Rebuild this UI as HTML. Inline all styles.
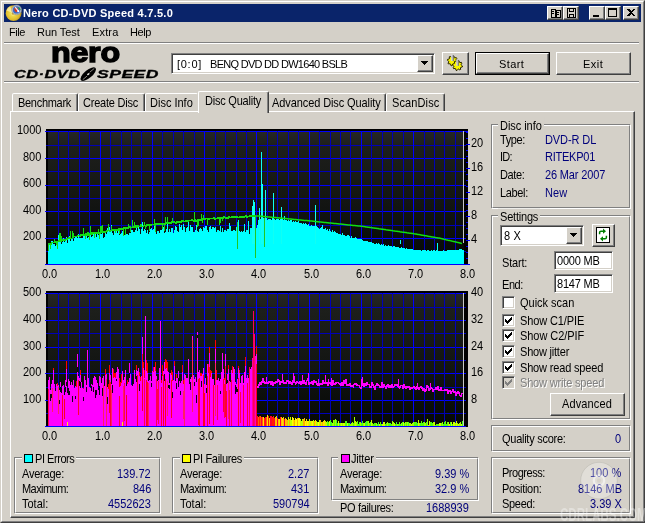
<!DOCTYPE html>
<html><head><meta charset="utf-8"><title>Nero CD-DVD Speed 4.7.5.0</title>
<style>
html,body{margin:0;padding:0}
body{width:645px;height:523px;background:#d4d0c8;position:relative;overflow:hidden;font-family:"Liberation Sans",sans-serif;font-size:11px;color:#000}
.abs{position:absolute}
.t{position:absolute;white-space:pre;line-height:14px;height:14px;will-change:transform;transform-origin:0 11px;transform:scaleY(1.125)}
.m{transform:none}
.frame{position:absolute;left:0;top:0;width:643px;height:521px;border:1px solid;border-color:#d4d0c8 #404040 #404040 #d4d0c8}
.frame2{position:absolute;left:1px;top:1px;width:641px;height:519px;border:1px solid;border-color:#fff #808080 #808080 #fff}
.title{position:absolute;left:4px;top:4px;width:637px;height:18px;background:#0a246a}
.btn{position:absolute;background:#d4d0c8;box-sizing:border-box;border:1px solid;border-color:#fff #404040 #404040 #fff;box-shadow:inset -1px -1px 0 #808080, inset 1px 1px 0 #d4d0c8}
.sunk{position:absolute;background:#fff;box-sizing:border-box;border:1px solid;border-color:#808080 #fff #fff #808080;box-shadow:inset 1px 1px 0 #404040, inset -1px -1px 0 #d4d0c8}
.sep{position:absolute;height:0;border-top:1px solid #808080;border-bottom:1px solid #fff}
.gb{position:absolute;box-sizing:border-box;border:1px solid #808080;box-shadow:1px 1px 0 #fff}
.gb i{position:absolute;left:0;top:0;right:0;bottom:0;border:1px solid;border-color:#fff transparent transparent #fff;margin:0 -1px -1px 0;display:block}
.cb{position:absolute;width:13px;height:13px;box-sizing:border-box;border:1px solid;border-color:#808080 #fff #fff #808080;box-shadow:inset 1px 1px 0 #404040, inset -1px -1px 0 #d4d0c8;padding:0}
.cb svg{left:2px !important;top:2px !important}
.tab{position:absolute;box-sizing:border-box;background:#d4d0c8;border:1px solid;border-color:#fff #404040 transparent #fff;border-radius:2px 2px 0 0;box-shadow:inset -1px 0 0 #808080}
.lg{will-change:transform;top:66px;height:16px;white-space:pre;font-weight:bold;font-style:italic;font-size:10.5px;line-height:16px;letter-spacing:0.3px;transform-origin:0 50%;-webkit-text-stroke:0.3px #000}
.sq{position:absolute;width:9px;height:9px;box-sizing:border-box;border:1px solid #000}
</style></head><body>
<div class="frame"></div><div class="frame2"></div>
<div class="title"></div>

<div class="btn" style="left:547px;top:6px;width:16px;height:14px"><svg class="abs" style="left:2px;top:1px" width="11" height="10" viewBox="0 0 11 10" shape-rendering="crispEdges"><path d="M1,1h4v8h-4zM6,2h4v7h-4z" fill="none" stroke="#000"/><path d="M2,3h2M2,5h2M7,4h2M7,6h2" stroke="#000"/></svg></div>
<div class="btn" style="left:563px;top:6px;width:16px;height:14px"><svg class="abs" style="left:2px;top:1px" width="11" height="10" viewBox="0 0 11 10" shape-rendering="crispEdges"><path d="M1.5,0.5h8v9h-8z" fill="none" stroke="#000"/><path d="M3.5,0.5v3h4v-3M3.5,9.5v-3h4v3" fill="none" stroke="#000"/></svg></div>
<div class="btn" style="left:589px;top:6px;width:16px;height:14px"><div class="abs" style="left:3px;top:8px;width:6px;height:2px;background:#000"></div></div>
<div class="btn" style="left:605px;top:6px;width:16px;height:14px"><div class="abs" style="left:2px;top:1px;width:9px;height:9px;box-sizing:border-box;border:1px solid #000;border-top-width:2px"></div></div>
<div class="btn" style="left:623px;top:6px;width:16px;height:14px"><svg class="abs" style="left:3px;top:2px" width="8" height="7" viewBox="0 0 8 7" shape-rendering="crispEdges"><path d="M0,0h2l2,2l2,-2h2l-3,3.5l3,3.5h-2l-2,-2l-2,2h-2l3,-3.5z" fill="#000"/></svg></div>
<svg class="abs" style="left:4px;top:4px" width="20" height="18" viewBox="4 4 20 18"><defs><radialGradient id="gold" cx="0.45" cy="0.5" r="0.55"><stop offset="0" stop-color="#fff6a0"/><stop offset="0.35" stop-color="#f0d848"/><stop offset="0.8" stop-color="#dcb82c"/><stop offset="1" stop-color="#a88418"/></radialGradient></defs><circle cx="13.6" cy="13.2" r="7.9" fill="url(#gold)"/><path d="M13.6,13.2L6.4,10.5A7.9,7.9 0 0 1 10,6.2Z" fill="#fff8b8" opacity="0.7"/><circle cx="13" cy="13.6" r="1.6" fill="#c8a428" stroke="#f8eca0" stroke-width="0.6"/><circle cx="16.6" cy="9.9" r="4.9" fill="#b8bcc8" stroke="#8a8e9c" stroke-width="0.6"/><circle cx="16.6" cy="9.9" r="3.7" fill="#3a6cc8"/><path d="M14.2,8.2L17.2,7.4L18.6,10.2L16.4,12.6L14.6,11Z" fill="#d83820"/><path d="M15.2,7.2L18.8,11.6" stroke="#f4f4f4" stroke-width="1.2"/><circle cx="18.3" cy="11.2" r="1" fill="#fff"/><path d="M18.4,7.4A3.7,3.7 0 0 1 20.2,10" stroke="#20a040" stroke-width="1.2" fill="none"/></svg>
<div class="sep" style="left:4px;top:42px;width:635px"></div>
<div class="sep" style="left:4px;top:81px;width:635px"></div>
<div class="abs" id="nero" style="will-change:transform;left:50.5px;top:36px;font-size:28px;line-height:34px;font-weight:bold;letter-spacing:-0.2px;-webkit-text-stroke:1.4px #000;white-space:pre;transform-origin:0 50%;transform:scaleX(1.15)">nero</div>
<div class="abs lg" id="cd1" style="left:14px;transform:scaleX(1.56)">CD·DVD</div>
<div class="abs lg" id="cd2" style="left:96.5px;transform:scaleX(1.67)">SPEED</div>
<svg class="abs" style="left:78px;top:64px" width="22" height="20" viewBox="0 0 22 20"><g transform="rotate(-40 10.3 10.1)"><ellipse cx="10.3" cy="10.1" rx="9.5" ry="3.9" fill="#000"/><ellipse cx="10.3" cy="10.1" rx="1.5" ry="0.8" fill="#e8e6e0"/><path d="M12.5,9.6H18.5M2.5,10.8H8" stroke="#d4d0c8" stroke-width="0.6"/></g></svg>
<div class="sunk" style="left:171px;top:53px;width:264px;height:21px"></div>
<div class="btn" style="left:417px;top:55px;width:16px;height:17px"><svg class="abs" style="left:3px;top:5px" width="7" height="4" viewBox="0 0 7 4" shape-rendering="crispEdges"><path d="M0,0h7l-3.5,4z" fill="#000"/></svg></div>
<div class="btn" style="left:442px;top:52px;width:27px;height:23px"><svg class="abs" style="left:0;top:0" width="25" height="21" viewBox="0 0 25 21"><polygon points="14.4,8.3 14.2,9.3 12.7,9.6 12.3,10.2 12.6,11.7 11.7,12.2 10.5,11.4 9.8,11.6 8.9,12.8 7.9,12.6 7.6,11.1 7.0,10.7 5.5,11.0 5.0,10.1 5.8,8.9 5.6,8.2 4.4,7.3 4.6,6.3 6.1,6.0 6.5,5.4 6.2,3.9 7.1,3.4 8.3,4.2 9.0,4.0 9.9,2.8 10.9,3.0 11.2,4.5 11.8,4.9 13.3,4.6 13.8,5.5 13.0,6.7 13.2,7.4" fill="#f8f400" stroke="#2a2400" stroke-width="1" stroke-linejoin="round"/><rect x="8.4" y="2.0" width="2" height="6.0" fill="#a4a4b0"/><rect x="8.4" y="2.0" width="0.8" height="6.0" fill="#ececf4"/><rect x="10.1" y="2.5" width="0.6" height="5.5" fill="#585864"/><polygon points="19.5,13.0 19.3,14.0 17.8,14.3 17.4,14.9 17.7,16.4 16.8,16.9 15.6,16.1 14.9,16.3 14.0,17.5 13.0,17.3 12.7,15.8 12.1,15.4 10.6,15.7 10.1,14.8 10.9,13.6 10.7,12.9 9.5,12.0 9.7,11.0 11.2,10.7 11.6,10.1 11.3,8.6 12.2,8.1 13.4,8.9 14.1,8.7 15.0,7.5 16.0,7.7 16.3,9.2 16.9,9.6 18.4,9.3 18.9,10.2 18.1,11.4 18.3,12.1" fill="#f8f400" stroke="#2a2400" stroke-width="1" stroke-linejoin="round"/><rect x="13.5" y="6.8" width="2" height="6.0" fill="#a4a4b0"/><rect x="13.5" y="6.8" width="0.8" height="6.0" fill="#ececf4"/><rect x="15.2" y="7.3" width="0.6" height="5.5" fill="#585864"/></svg></div>
<div class="abs" style="left:475px;top:52px;width:75px;height:23px;background:#000"></div>
<div class="btn" style="left:476px;top:53px;width:73px;height:21px"></div>
<div class="btn" style="left:556px;top:52px;width:75px;height:23px"></div>
<div class="tab" style="left:12px;top:93px;width:66px;height:19px"></div>
<div class="tab" style="left:78px;top:93px;width:67px;height:19px"></div>
<div class="tab" style="left:145px;top:93px;width:53px;height:19px;border-right-color:transparent;box-shadow:none"></div>
<div class="tab" style="left:268px;top:93px;width:118px;height:19px"></div>
<div class="tab" style="left:386px;top:93px;width:59px;height:19px"></div>
<div class="abs" style="left:10px;top:111px;width:625px;height:407px;box-sizing:border-box;border:1px solid;border-color:#fff #404040 #404040 #fff;box-shadow:inset -1px -1px 0 #808080"></div>
<div class="tab" style="left:198px;top:91px;width:71px;height:22px;border-bottom:none"></div>
<svg class="abs" style="left:0;top:0" width="645" height="523" viewBox="0 0 645 523" shape-rendering="crispEdges"><defs><linearGradient id="bg" x1="0" y1="0" x2="0" y2="1"><stop offset="0" stop-color="#262626"/><stop offset="0.12" stop-color="#1d1f1b"/><stop offset="0.55" stop-color="#131512"/><stop offset="1" stop-color="#050805"/></linearGradient></defs><rect x="46" y="129" width="422" height="136" fill="#000"/><rect x="48" y="131" width="416" height="133" fill="url(#bg)"/><rect x="45" y="131" width="421" height="1" fill="#00f"/><rect x="46" y="145" width="420" height="1" fill="#0000b8"/><rect x="45" y="158" width="421" height="1" fill="#00f"/><rect x="46" y="171" width="420" height="1" fill="#0000b8"/><rect x="45" y="185" width="421" height="1" fill="#00f"/><rect x="46" y="198" width="420" height="1" fill="#0000b8"/><rect x="45" y="211" width="421" height="1" fill="#00f"/><rect x="46" y="225" width="420" height="1" fill="#0000b8"/><rect x="45" y="238" width="421" height="1" fill="#00f"/><rect x="46" y="251" width="420" height="1" fill="#0000b8"/><rect x="45" y="264" width="421" height="1" fill="#00f"/><rect x="58" y="131" width="1" height="133" fill="#0000b8"/><rect x="68" y="131" width="1" height="133" fill="#0000b8"/><rect x="79" y="131" width="1" height="133" fill="#0000b8"/><rect x="89" y="131" width="1" height="133" fill="#0000b8"/><rect x="100" y="131" width="1" height="133" fill="#00f"/><rect x="110" y="131" width="1" height="133" fill="#0000b8"/><rect x="121" y="131" width="1" height="133" fill="#0000b8"/><rect x="131" y="131" width="1" height="133" fill="#0000b8"/><rect x="141" y="131" width="1" height="133" fill="#0000b8"/><rect x="152" y="131" width="1" height="133" fill="#00f"/><rect x="162" y="131" width="1" height="133" fill="#0000b8"/><rect x="173" y="131" width="1" height="133" fill="#0000b8"/><rect x="183" y="131" width="1" height="133" fill="#0000b8"/><rect x="194" y="131" width="1" height="133" fill="#0000b8"/><rect x="204" y="131" width="1" height="133" fill="#00f"/><rect x="215" y="131" width="1" height="133" fill="#0000b8"/><rect x="225" y="131" width="1" height="133" fill="#0000b8"/><rect x="236" y="131" width="1" height="133" fill="#0000b8"/><rect x="246" y="131" width="1" height="133" fill="#0000b8"/><rect x="256" y="131" width="1" height="133" fill="#00f"/><rect x="267" y="131" width="1" height="133" fill="#0000b8"/><rect x="277" y="131" width="1" height="133" fill="#0000b8"/><rect x="288" y="131" width="1" height="133" fill="#0000b8"/><rect x="298" y="131" width="1" height="133" fill="#0000b8"/><rect x="309" y="131" width="1" height="133" fill="#00f"/><rect x="319" y="131" width="1" height="133" fill="#0000b8"/><rect x="330" y="131" width="1" height="133" fill="#0000b8"/><rect x="340" y="131" width="1" height="133" fill="#0000b8"/><rect x="350" y="131" width="1" height="133" fill="#0000b8"/><rect x="361" y="131" width="1" height="133" fill="#00f"/><rect x="371" y="131" width="1" height="133" fill="#0000b8"/><rect x="382" y="131" width="1" height="133" fill="#0000b8"/><rect x="392" y="131" width="1" height="133" fill="#0000b8"/><rect x="403" y="131" width="1" height="133" fill="#0000b8"/><rect x="413" y="131" width="1" height="133" fill="#00f"/><rect x="424" y="131" width="1" height="133" fill="#0000b8"/><rect x="434" y="131" width="1" height="133" fill="#0000b8"/><rect x="444" y="131" width="1" height="133" fill="#0000b8"/><rect x="455" y="131" width="1" height="133" fill="#0000b8"/><rect x="466" y="131" width="2" height="1" fill="#00f"/><path d="M48,264L48,248.1L49,248.1L49,243.4L50,243.4L50,245.2L51,245.2L51,240.6L52,240.6L52,241.1L53,241.1L53,243.6L54,243.6L54,243.5L55,243.5L55,245.9L56,245.9L56,244.3L57,244.3L57,242.5L58,242.5L58,234.6L59,234.6L59,239.8L60,239.8L60,242.2L61,242.2L61,243.9L62,243.9L62,242.1L63,242.1L63,237.8L64,237.8L64,241.9L65,241.9L65,240.2L66,240.2L66,237.0L67,237.0L67,242.6L68,242.6L68,238.8L69,238.8L69,236.4L70,236.4L70,240.9L71,240.9L71,238.7L72,238.7L72,236.2L73,236.2L73,241.0L74,241.0L74,238.4L75,238.4L75,236.8L76,236.8L76,237.2L77,237.2L77,238.3L78,238.3L78,233.6L79,233.6L79,237.8L80,237.8L80,238.4L81,238.4L81,237.6L82,237.6L82,238.2L83,238.2L83,235.0L84,235.0L84,235.3L85,235.3L85,238.1L86,238.1L86,236.2L87,236.2L87,238.0L88,238.0L88,236.7L89,236.7L89,237.2L90,237.2L90,235.1L91,235.1L91,236.8L92,236.8L92,236.1L93,236.1L93,234.2L94,234.2L94,236.0L95,236.0L95,232.7L96,232.7L96,237.2L97,237.2L97,232.1L98,232.1L98,235.4L99,235.4L99,235.2L100,235.2L100,229.7L101,229.7L101,234.3L102,234.3L102,230.2L103,230.2L103,237.5L104,237.5L104,236.8L105,236.8L105,232.8L106,232.8L106,233.9L107,233.9L107,228.1L108,228.1L108,231.0L109,231.0L109,227.1L110,227.1L110,230.6L111,230.6L111,225.0L112,225.0L112,233.0L113,233.0L113,235.2L114,235.2L114,230.5L115,230.5L115,230.5L116,230.5L116,231.1L117,231.1L117,233.4L118,233.4L118,231.0L119,231.0L119,235.4L120,235.4L120,234.2L121,234.2L121,233.2L122,233.2L122,231.3L123,231.3L123,232.9L124,232.9L124,235.0L125,235.0L125,228.1L126,228.1L126,233.7L127,233.7L127,233.7L128,233.7L128,234.5L129,234.5L129,232.9L130,232.9L130,232.6L131,232.6L131,230.4L132,230.4L132,230.2L133,230.2L133,231.9L134,231.9L134,232.2L135,232.2L135,230.1L136,230.1L136,225.9L137,225.9L137,230.6L138,230.6L138,225.2L139,225.2L139,228.7L140,228.7L140,234.4L141,234.4L141,229.0L142,229.0L142,222.4L143,222.4L143,231.4L144,231.4L144,229.3L145,229.3L145,229.7L146,229.7L146,233.3L147,233.3L147,229.9L148,229.9L148,233.6L149,233.6L149,231.7L150,231.7L150,228.7L151,228.7L151,228.3L152,228.3L152,229.9L153,229.9L153,229.0L154,229.0L154,226.4L155,226.4L155,228.7L156,228.7L156,233.5L157,233.5L157,230.8L158,230.8L158,230.5L159,230.5L159,233.1L160,233.1L160,230.0L161,230.0L161,229.5L162,229.5L162,228.1L163,228.1L163,227.3L164,227.3L164,232.5L165,232.5L165,231.8L166,231.8L166,229.0L167,229.0L167,224.4L168,224.4L168,231.7L169,231.7L169,229.4L170,229.4L170,232.0L171,232.0L171,228.0L172,228.0L172,227.5L173,227.5L173,232.7L174,232.7L174,229.5L175,229.5L175,226.1L176,226.1L176,226.6L177,226.6L177,231.1L178,231.1L178,231.7L179,231.7L179,224.3L180,224.3L180,226.9L181,226.9L181,224.9L182,224.9L182,229.8L183,229.8L183,223.8L184,223.8L184,227.2L185,227.2L185,231.5L186,231.5L186,228.3L187,228.3L187,227.3L188,227.3L188,221.0L189,221.0L189,231.3L190,231.3L190,225.2L191,225.2L191,226.6L192,226.6L192,227.1L193,227.1L193,232.0L194,232.0L194,232.2L195,232.2L195,229.9L196,229.9L196,224.5L197,224.5L197,231.2L198,231.2L198,231.9L199,231.9L199,228.7L200,228.7L200,227.5L201,227.5L201,229.2L202,229.2L202,231.1L203,231.1L203,226.7L204,226.7L204,228.1L205,228.1L205,225.8L206,225.8L206,225.5L207,225.5L207,230.3L208,230.3L208,231.8L209,231.8L209,226.6L210,226.6L210,226.0L211,226.0L211,229.0L212,229.0L212,227.1L213,227.1L213,226.5L214,226.5L214,228.1L215,228.1L215,226.5L216,226.5L216,231.9L217,231.9L217,230.4L218,230.4L218,230.4L219,230.4L219,231.4L220,231.4L220,226.4L221,226.4L221,232.0L222,232.0L222,227.9L223,227.9L223,231.8L224,231.8L224,230.0L225,230.0L225,229.7L226,229.7L226,231.2L227,231.2L227,229.0L228,229.0L228,229.0L229,229.0L229,222.8L230,222.8L230,226.2L231,226.2L231,231.4L232,231.4L232,231.3L233,231.3L233,230.3L234,230.3L234,230.1L235,230.1L235,231.3L236,231.3L236,226.7L237,226.7L237,227.4L238,227.4L238,220.2L239,220.2L239,230.7L240,230.7L240,231.7L241,231.7L241,230.5L242,230.5L242,231.8L243,231.8L243,230.5L244,230.5L244,223.5L245,223.5L245,231.5L246,231.5L246,229.8L247,229.8L247,230.1L248,230.1L248,221.4L249,221.4L249,233.5L250,233.5L250,227.6L251,227.6L251,227.9L252,227.9L252,230.1L253,230.1L253,232.0L254,232.0L254,229.9L255,229.9L255,223.3L256,223.3L256,227.7L257,227.7L257,225.3L258,225.3L258,219.7L259,219.7L259,218.1L260,218.1L260,219.2L261,219.2L261,218.8L262,218.8L262,220.0L263,220.0L263,217.9L264,217.9L264,218.3L265,218.3L265,218.6L266,218.6L266,218.4L267,218.4L267,219.5L268,219.5L268,219.3L269,219.3L269,219.4L270,219.4L270,218.6L271,218.6L271,219.7L272,219.7L272,218.0L273,218.0L273,218.9L274,218.9L274,219.0L275,219.0L275,219.8L276,219.8L276,218.7L277,218.7L277,218.6L278,218.6L278,219.1L279,219.1L279,220.0L280,220.0L280,219.0L281,219.0L281,220.4L282,220.4L282,219.1L283,219.1L283,219.7L284,219.7L284,216.2L285,216.2L285,220.1L286,220.1L286,220.0L287,220.0L287,220.9L288,220.9L288,219.8L289,219.8L289,220.8L290,220.8L290,219.9L291,219.9L291,220.1L292,220.1L292,221.8L293,221.8L293,220.8L294,220.8L294,221.6L295,221.6L295,220.9L296,220.9L296,221.6L297,221.6L297,222.0L298,222.0L298,221.4L299,221.4L299,223.4L300,223.4L300,222.6L301,222.6L301,223.3L302,223.3L302,224.2L303,224.2L303,223.0L304,223.0L304,223.6L305,223.6L305,223.2L306,223.2L306,224.0L307,224.0L307,224.8L308,224.8L308,223.8L309,223.8L309,225.8L310,225.8L310,226.2L311,226.2L311,225.1L312,225.1L312,226.0L313,226.0L313,226.3L314,226.3L314,225.6L315,225.6L315,226.9L316,226.9L316,226.1L317,226.1L317,226.8L318,226.8L318,227.7L319,227.7L319,228.5L320,228.5L320,228.4L321,228.4L321,227.2L322,227.2L322,224.8L323,224.8L323,229.4L324,229.4L324,229.4L325,229.4L325,228.4L326,228.4L326,230.2L327,230.2L327,229.2L328,229.2L328,230.7L329,230.7L329,229.4L330,229.4L330,230.5L331,230.5L331,231.7L332,231.7L332,230.2L333,230.2L333,231.6L334,231.6L334,231.2L335,231.2L335,231.8L336,231.8L336,233.0L337,233.0L337,233.2L338,233.2L338,233.5L339,233.5L339,233.8L340,233.8L340,234.3L341,234.3L341,234.6L342,234.6L342,233.2L343,233.2L343,235.2L344,235.2L344,234.7L345,234.7L345,235.7L346,235.7L346,235.9L347,235.9L347,235.1L348,235.1L348,235.1L349,235.1L349,236.3L350,236.3L350,237.5L351,237.5L351,235.9L352,235.9L352,238.1L353,238.1L353,237.7L354,237.7L354,237.8L355,237.8L355,237.4L356,237.4L356,237.8L357,237.8L357,238.6L358,238.6L358,239.3L359,239.3L359,238.8L360,238.8L360,239.0L361,239.0L361,239.3L362,239.3L362,239.9L363,239.9L363,241.3L364,241.3L364,241.1L365,241.1L365,241.0L366,241.0L366,241.2L367,241.2L367,240.8L368,240.8L368,242.0L369,242.0L369,241.5L370,241.5L370,242.2L371,242.2L371,241.7L372,241.7L372,242.9L373,242.9L373,242.6L374,242.6L374,243.5L375,243.5L375,243.5L376,243.5L376,242.5L377,242.5L377,243.7L378,243.7L378,243.0L379,243.0L379,243.8L380,243.8L380,244.8L381,244.8L381,243.7L382,243.7L382,245.1L383,245.1L383,244.1L384,244.1L384,245.6L385,245.6L385,244.8L386,244.8L386,245.7L387,245.7L387,245.7L388,245.7L388,245.0L389,245.0L389,245.8L390,245.8L390,245.7L391,245.7L391,245.8L392,245.8L392,246.8L393,246.8L393,245.9L394,245.9L394,246.0L395,246.0L395,247.2L396,247.2L396,246.8L397,246.8L397,247.3L398,247.3L398,246.9L399,246.9L399,247.9L400,247.9L400,247.5L401,247.5L401,247.3L402,247.3L402,247.5L403,247.5L403,248.4L404,248.4L404,247.7L405,247.7L405,248.6L406,248.6L406,248.0L407,248.0L407,248.5L408,248.5L408,249.1L409,249.1L409,248.6L410,248.6L410,248.7L411,248.7L411,248.9L412,248.9L412,248.8L413,248.8L413,249.7L414,249.7L414,249.9L415,249.9L415,250.1L416,250.1L416,249.7L417,249.7L417,249.9L418,249.9L418,250.0L419,250.0L419,249.9L420,249.9L420,250.2L421,250.2L421,250.5L422,250.5L422,250.1L423,250.1L423,250.3L424,250.3L424,250.2L425,250.2L425,249.8L426,249.8L426,250.6L427,250.6L427,250.2L428,250.2L428,250.2L429,250.2L429,250.6L430,250.6L430,250.5L431,250.5L431,250.0L432,250.0L432,250.7L433,250.7L433,250.4L434,250.4L434,250.3L435,250.3L435,250.8L436,250.8L436,250.3L437,250.3L437,243.0L438,243.0L438,250.8L439,250.8L439,250.7L440,250.7L440,251.0L441,251.0L441,250.7L442,250.7L442,251.0L443,251.0L443,250.4L444,250.4L444,250.6L445,250.6L445,250.8L446,250.8L446,250.6L447,250.6L447,250.1L448,250.1L448,250.1L449,250.1L449,250.3L450,250.3L450,250.3L451,250.3L451,250.2L452,250.2L452,249.6L453,249.6L453,250.3L454,250.3L454,249.6L455,249.6L455,249.5L456,249.5L456,250.0L457,250.0L457,249.8L458,249.8L458,249.5L459,249.5L459,249.2L460,249.2L460,249.0L461,249.0L461,248.9L462,248.9L462,249.5L463,249.5L463,249.5L464,249.5L464,264Z" fill="#0ff"/><rect x="252" y="205.5" width="1" height="38.5" fill="#10fff4"/><rect x="253" y="199.8" width="1" height="44.2" fill="#10fff4"/><rect x="254" y="201.5" width="1" height="42.5" fill="#10fff4"/><rect x="259" y="208.1" width="1" height="35.9" fill="#10fff4"/><rect x="261" y="151.5" width="1" height="92.5" fill="#10fff4"/><rect x="262" y="184.2" width="1" height="59.8" fill="#10fff4"/><rect x="265" y="189.5" width="1" height="54.5" fill="#10fff4"/><rect x="273" y="193.0" width="1" height="51.0" fill="#10fff4"/><rect x="281" y="206.5" width="1" height="37.5" fill="#10fff4"/><rect x="315" y="204.8" width="1" height="39.2" fill="#10fff4"/><rect x="400" y="240.3" width="1" height="3.7" fill="#10fff4"/><rect x="48" y="243.3" width="1" height="8.0" fill="#14dc14"/><rect x="49" y="243.3" width="1" height="2.1" fill="#14dc14"/><rect x="50" y="243.2" width="1" height="5.7" fill="#14dc14"/><rect x="51" y="241.6" width="1" height="3.1" fill="#14dc14"/><rect x="52" y="241.6" width="1" height="1.7" fill="#14dc14"/><rect x="53" y="241.7" width="1" height="1.5" fill="#14dc14"/><rect x="54" y="238.6" width="1" height="4.7" fill="#14dc14"/><rect x="55" y="241.0" width="1" height="2.2" fill="#14dc14"/><rect x="56" y="241.0" width="1" height="4.2" fill="#14dc14"/><rect x="57" y="240.7" width="1" height="7.8" fill="#14dc14"/><rect x="58" y="240.1" width="1" height="2.1" fill="#14dc14"/><rect x="59" y="232.9" width="1" height="8.6" fill="#14dc14"/><rect x="60" y="232.7" width="1" height="8.8" fill="#14dc14"/><rect x="61" y="236.2" width="1" height="5.3" fill="#14dc14"/><rect x="62" y="239.1" width="1" height="1.5" fill="#14dc14"/><rect x="63" y="239.1" width="1" height="1.7" fill="#14dc14"/><rect x="64" y="239.2" width="1" height="1.5" fill="#14dc14"/><rect x="65" y="238.8" width="1" height="2.0" fill="#14dc14"/><rect x="66" y="238.3" width="1" height="2.0" fill="#14dc14"/><rect x="67" y="237.7" width="1" height="2.2" fill="#14dc14"/><rect x="68" y="237.4" width="1" height="1.8" fill="#14dc14"/><rect x="69" y="237.4" width="1" height="1.5" fill="#14dc14"/><rect x="70" y="231.2" width="1" height="8.2" fill="#14dc14"/><rect x="71" y="237.5" width="1" height="1.8" fill="#14dc14"/><rect x="72" y="230.9" width="1" height="8.2" fill="#14dc14"/><rect x="73" y="232.7" width="1" height="5.5" fill="#14dc14"/><rect x="74" y="235.7" width="1" height="1.5" fill="#14dc14"/><rect x="75" y="235.7" width="1" height="1.5" fill="#14dc14"/><rect x="76" y="235.5" width="1" height="1.7" fill="#14dc14"/><rect x="77" y="234.8" width="1" height="2.2" fill="#14dc14"/><rect x="78" y="234.5" width="1" height="1.7" fill="#14dc14"/><rect x="79" y="234.5" width="1" height="2.2" fill="#14dc14"/><rect x="80" y="234.3" width="1" height="2.4" fill="#14dc14"/><rect x="81" y="234.3" width="1" height="2.1" fill="#14dc14"/><rect x="82" y="234.4" width="1" height="2.0" fill="#14dc14"/><rect x="83" y="227.5" width="1" height="8.5" fill="#14dc14"/><rect x="84" y="234.0" width="1" height="2.0" fill="#14dc14"/><rect x="85" y="233.4" width="1" height="5.3" fill="#14dc14"/><rect x="86" y="233.4" width="1" height="2.3" fill="#14dc14"/><rect x="87" y="232.4" width="1" height="3.3" fill="#14dc14"/><rect x="88" y="232.4" width="1" height="3.1" fill="#14dc14"/><rect x="89" y="233.0" width="1" height="7.1" fill="#14dc14"/><rect x="90" y="226.4" width="1" height="8.1" fill="#14dc14"/><rect x="91" y="231.9" width="1" height="2.7" fill="#14dc14"/><rect x="92" y="232.1" width="1" height="2.5" fill="#14dc14"/><rect x="93" y="231.6" width="1" height="2.0" fill="#14dc14"/><rect x="94" y="231.6" width="1" height="6.1" fill="#14dc14"/><rect x="95" y="231.9" width="1" height="1.6" fill="#14dc14"/><rect x="96" y="232.0" width="1" height="1.8" fill="#14dc14"/><rect x="97" y="231.7" width="1" height="2.0" fill="#14dc14"/><rect x="98" y="229.1" width="1" height="4.5" fill="#14dc14"/><rect x="99" y="232.1" width="1" height="6.6" fill="#14dc14"/><rect x="100" y="225.5" width="1" height="8.0" fill="#14dc14"/><rect x="101" y="225.6" width="1" height="7.7" fill="#14dc14"/><rect x="102" y="224.5" width="1" height="8.1" fill="#14dc14"/><rect x="103" y="230.7" width="1" height="2.0" fill="#14dc14"/><rect x="104" y="230.7" width="1" height="1.8" fill="#14dc14"/><rect x="105" y="230.6" width="1" height="1.9" fill="#14dc14"/><rect x="106" y="230.3" width="1" height="1.8" fill="#14dc14"/><rect x="107" y="229.6" width="1" height="2.2" fill="#14dc14"/><rect x="108" y="223.9" width="1" height="7.4" fill="#14dc14"/><rect x="109" y="229.8" width="1" height="1.7" fill="#14dc14"/><rect x="110" y="229.5" width="1" height="2.0" fill="#14dc14"/><rect x="111" y="225.7" width="1" height="5.4" fill="#14dc14"/><rect x="112" y="229.3" width="1" height="1.7" fill="#14dc14"/><rect x="113" y="229.3" width="1" height="1.6" fill="#14dc14"/><rect x="114" y="228.8" width="1" height="2.0" fill="#14dc14"/><rect x="115" y="228.8" width="1" height="3.7" fill="#14dc14"/><rect x="116" y="229.0" width="1" height="1.8" fill="#14dc14"/><rect x="117" y="229.1" width="1" height="1.6" fill="#14dc14"/><rect x="118" y="228.1" width="1" height="2.5" fill="#14dc14"/><rect x="119" y="228.1" width="1" height="5.9" fill="#14dc14"/><rect x="120" y="228.1" width="1" height="1.9" fill="#14dc14"/><rect x="121" y="227.5" width="1" height="2.5" fill="#14dc14"/><rect x="122" y="227.5" width="1" height="2.0" fill="#14dc14"/><rect x="123" y="227.3" width="1" height="9.0" fill="#14dc14"/><rect x="124" y="227.3" width="1" height="1.8" fill="#14dc14"/><rect x="125" y="227.3" width="1" height="7.5" fill="#14dc14"/><rect x="126" y="227.1" width="1" height="1.7" fill="#14dc14"/><rect x="127" y="227.1" width="1" height="1.5" fill="#14dc14"/><rect x="128" y="224.3" width="1" height="4.4" fill="#14dc14"/><rect x="129" y="226.1" width="1" height="1.7" fill="#14dc14"/><rect x="130" y="226.1" width="1" height="6.1" fill="#14dc14"/><rect x="131" y="226.6" width="1" height="1.8" fill="#14dc14"/><rect x="132" y="219.9" width="1" height="8.2" fill="#14dc14"/><rect x="133" y="226.0" width="1" height="2.1" fill="#14dc14"/><rect x="134" y="222.2" width="1" height="6.1" fill="#14dc14"/><rect x="135" y="224.7" width="1" height="3.6" fill="#14dc14"/><rect x="136" y="224.7" width="1" height="3.6" fill="#14dc14"/><rect x="137" y="225.1" width="1" height="3.1" fill="#14dc14"/><rect x="138" y="225.1" width="1" height="2.1" fill="#14dc14"/><rect x="139" y="225.7" width="1" height="1.6" fill="#14dc14"/><rect x="140" y="224.4" width="1" height="2.8" fill="#14dc14"/><rect x="141" y="224.4" width="1" height="2.9" fill="#14dc14"/><rect x="142" y="225.5" width="1" height="1.8" fill="#14dc14"/><rect x="143" y="224.5" width="1" height="2.5" fill="#14dc14"/><rect x="144" y="221.5" width="1" height="4.6" fill="#14dc14"/><rect x="145" y="224.6" width="1" height="4.5" fill="#14dc14"/><rect x="146" y="224.4" width="1" height="2.2" fill="#14dc14"/><rect x="147" y="224.4" width="1" height="1.5" fill="#14dc14"/><rect x="148" y="223.9" width="1" height="2.0" fill="#14dc14"/><rect x="149" y="223.9" width="1" height="7.5" fill="#14dc14"/><rect x="150" y="224.2" width="1" height="1.5" fill="#14dc14"/><rect x="151" y="223.8" width="1" height="1.9" fill="#14dc14"/><rect x="152" y="223.6" width="1" height="1.7" fill="#14dc14"/><rect x="153" y="223.6" width="1" height="1.6" fill="#14dc14"/><rect x="154" y="219.2" width="1" height="6.5" fill="#14dc14"/><rect x="155" y="223.2" width="1" height="8.4" fill="#14dc14"/><rect x="156" y="223.2" width="1" height="1.6" fill="#14dc14"/><rect x="157" y="222.7" width="1" height="2.1" fill="#14dc14"/><rect x="158" y="222.7" width="1" height="2.2" fill="#14dc14"/><rect x="159" y="223.2" width="1" height="1.7" fill="#14dc14"/><rect x="160" y="223.2" width="1" height="1.7" fill="#14dc14"/><rect x="161" y="222.7" width="1" height="2.2" fill="#14dc14"/><rect x="162" y="222.7" width="1" height="6.6" fill="#14dc14"/><rect x="163" y="222.8" width="1" height="2.2" fill="#14dc14"/><rect x="164" y="223.0" width="1" height="8.4" fill="#14dc14"/><rect x="165" y="216.9" width="1" height="7.7" fill="#14dc14"/><rect x="166" y="222.1" width="1" height="1.9" fill="#14dc14"/><rect x="167" y="216.5" width="1" height="7.1" fill="#14dc14"/><rect x="168" y="222.0" width="1" height="2.0" fill="#14dc14"/><rect x="169" y="221.8" width="1" height="2.2" fill="#14dc14"/><rect x="170" y="221.8" width="1" height="1.9" fill="#14dc14"/><rect x="171" y="221.0" width="1" height="2.7" fill="#14dc14"/><rect x="172" y="218.1" width="1" height="4.7" fill="#14dc14"/><rect x="173" y="221.3" width="1" height="1.5" fill="#14dc14"/><rect x="174" y="221.3" width="1" height="1.9" fill="#14dc14"/><rect x="175" y="221.7" width="1" height="1.8" fill="#14dc14"/><rect x="176" y="220.8" width="1" height="2.8" fill="#14dc14"/><rect x="177" y="220.8" width="1" height="2.0" fill="#14dc14"/><rect x="178" y="220.7" width="1" height="2.1" fill="#14dc14"/><rect x="179" y="220.7" width="1" height="2.0" fill="#14dc14"/><rect x="180" y="221.0" width="1" height="1.7" fill="#14dc14"/><rect x="181" y="219.9" width="1" height="2.6" fill="#14dc14"/><rect x="182" y="219.9" width="1" height="2.0" fill="#14dc14"/><rect x="183" y="220.3" width="1" height="1.6" fill="#14dc14"/><rect x="184" y="220.5" width="1" height="1.9" fill="#14dc14"/><rect x="185" y="220.4" width="1" height="2.0" fill="#14dc14"/><rect x="186" y="220.3" width="1" height="1.6" fill="#14dc14"/><rect x="187" y="220.3" width="1" height="1.5" fill="#14dc14"/><rect x="188" y="219.5" width="1" height="2.3" fill="#14dc14"/><rect x="189" y="219.5" width="1" height="1.7" fill="#14dc14"/><rect x="190" y="219.6" width="1" height="1.6" fill="#14dc14"/><rect x="191" y="219.1" width="1" height="2.0" fill="#14dc14"/><rect x="192" y="219.1" width="1" height="2.0" fill="#14dc14"/><rect x="193" y="219.7" width="1" height="2.1" fill="#14dc14"/><rect x="194" y="211.7" width="1" height="10.1" fill="#14dc14"/><rect x="195" y="218.6" width="1" height="3.2" fill="#14dc14"/><rect x="196" y="219.6" width="1" height="2.2" fill="#14dc14"/><rect x="197" y="219.2" width="1" height="7.4" fill="#14dc14"/><rect x="198" y="219.2" width="1" height="7.1" fill="#14dc14"/><rect x="199" y="218.8" width="1" height="2.1" fill="#14dc14"/><rect x="200" y="218.8" width="1" height="1.7" fill="#14dc14"/><rect x="201" y="213.7" width="1" height="7.1" fill="#14dc14"/><rect x="202" y="218.1" width="1" height="5.2" fill="#14dc14"/><rect x="203" y="214.6" width="1" height="5.6" fill="#14dc14"/><rect x="204" y="218.4" width="1" height="1.8" fill="#14dc14"/><rect x="205" y="217.6" width="1" height="2.3" fill="#14dc14"/><rect x="206" y="217.6" width="1" height="1.5" fill="#14dc14"/><rect x="207" y="217.6" width="1" height="7.0" fill="#14dc14"/><rect x="208" y="218.0" width="1" height="2.3" fill="#14dc14"/><rect x="209" y="217.8" width="1" height="2.5" fill="#14dc14"/><rect x="210" y="217.7" width="1" height="1.5" fill="#14dc14"/><rect x="211" y="217.7" width="1" height="1.6" fill="#14dc14"/><rect x="212" y="217.5" width="1" height="1.8" fill="#14dc14"/><rect x="213" y="217.3" width="1" height="1.7" fill="#14dc14"/><rect x="214" y="217.3" width="1" height="2.2" fill="#14dc14"/><rect x="215" y="218.0" width="1" height="1.5" fill="#14dc14"/><rect x="216" y="217.6" width="1" height="1.8" fill="#14dc14"/><rect x="217" y="217.4" width="1" height="1.7" fill="#14dc14"/><rect x="218" y="217.3" width="1" height="1.6" fill="#14dc14"/><rect x="219" y="216.8" width="1" height="7.8" fill="#14dc14"/><rect x="220" y="216.8" width="1" height="5.8" fill="#14dc14"/><rect x="221" y="216.9" width="1" height="1.6" fill="#14dc14"/><rect x="222" y="216.9" width="1" height="4.4" fill="#14dc14"/><rect x="223" y="216.4" width="1" height="2.3" fill="#14dc14"/><rect x="224" y="216.4" width="1" height="1.7" fill="#14dc14"/><rect x="225" y="216.6" width="1" height="2.2" fill="#14dc14"/><rect x="226" y="216.5" width="1" height="2.3" fill="#14dc14"/><rect x="227" y="216.5" width="1" height="2.0" fill="#14dc14"/><rect x="228" y="216.4" width="1" height="2.1" fill="#14dc14"/><rect x="229" y="216.4" width="1" height="1.9" fill="#14dc14"/><rect x="230" y="216.6" width="1" height="1.7" fill="#14dc14"/><rect x="231" y="216.2" width="1" height="2.0" fill="#14dc14"/><rect x="232" y="216.2" width="1" height="1.6" fill="#14dc14"/><rect x="233" y="216.1" width="1" height="1.7" fill="#14dc14"/><rect x="234" y="215.8" width="1" height="1.8" fill="#14dc14"/><rect x="235" y="215.8" width="1" height="1.9" fill="#14dc14"/><rect x="236" y="216.2" width="1" height="1.5" fill="#14dc14"/><rect x="237" y="216.2" width="1" height="1.7" fill="#14dc14"/><rect x="238" y="216.5" width="1" height="1.9" fill="#14dc14"/><rect x="239" y="216.0" width="1" height="2.4" fill="#14dc14"/><rect x="240" y="216.0" width="1" height="1.9" fill="#14dc14"/><rect x="241" y="216.3" width="1" height="1.6" fill="#14dc14"/><rect x="242" y="216.0" width="1" height="2.0" fill="#14dc14"/><rect x="243" y="216.0" width="1" height="1.8" fill="#14dc14"/><rect x="244" y="216.0" width="1" height="1.8" fill="#14dc14"/><rect x="245" y="215.2" width="1" height="2.2" fill="#14dc14"/><rect x="246" y="215.2" width="1" height="2.5" fill="#14dc14"/><rect x="247" y="215.5" width="1" height="2.2" fill="#14dc14"/><rect x="248" y="215.5" width="1" height="1.9" fill="#14dc14"/><rect x="249" y="215.0" width="1" height="2.4" fill="#14dc14"/><rect x="250" y="215.0" width="1" height="1.6" fill="#14dc14"/><rect x="251" y="215.1" width="1" height="1.6" fill="#14dc14"/><rect x="252" y="215.2" width="1" height="1.7" fill="#14dc14"/><rect x="253" y="215.4" width="1" height="1.6" fill="#14dc14"/><rect x="254" y="215.4" width="1" height="1.6" fill="#14dc14"/><polyline points="254.0,216.2 255.0,215.8 256.0,215.9 257.0,215.9 258.0,216.0 259.0,216.0 260.0,216.1 261.0,216.2 262.0,216.3 263.0,216.4 264.0,216.5 265.0,216.6 266.0,216.7 267.0,216.8 268.0,216.9 269.0,217.0 270.0,217.1 271.0,217.2 272.0,217.3 273.0,217.4 274.0,217.5 275.0,217.5 276.0,217.6 277.0,217.7 278.0,217.8 279.0,217.9 280.0,218.0 281.0,218.1 282.0,218.2 283.0,218.3 284.0,218.4 285.0,218.5 286.0,218.6 287.0,218.7 288.0,218.8 289.0,218.9 290.0,219.0 291.0,219.1 292.0,219.2 293.0,219.3 294.0,219.4 295.0,219.5 296.0,219.6 297.0,219.7 298.0,219.8 299.0,219.9 300.0,220.0 301.0,220.1 302.0,220.2 303.0,220.3 304.0,220.4 305.0,220.5 306.0,220.5 307.0,220.6 308.0,220.7 309.0,220.8 310.0,220.9 311.0,221.0 312.0,221.1 313.0,221.2 314.0,221.3 315.0,221.5 316.0,221.6 317.0,221.7 318.0,221.8 319.0,221.9 320.0,222.0 321.0,222.1 322.0,222.2 323.0,222.3 324.0,222.4 325.0,222.5 326.0,222.6 327.0,222.7 328.0,222.8 329.0,222.9 330.0,223.0 331.0,223.1 332.0,223.2 333.0,223.3 334.0,223.4 335.0,223.5 336.0,223.6 337.0,223.7 338.0,223.8 339.0,223.9 340.0,224.0 341.0,224.1 342.0,224.2 343.0,224.3 344.0,224.5 345.0,224.6 346.0,224.7 347.0,224.8 348.0,224.9 349.0,225.0 350.0,225.1 351.0,225.2 352.0,225.3 353.0,225.4 354.0,225.5 355.0,225.6 356.0,225.7 357.0,225.8 358.0,225.9 359.0,226.0 360.0,226.1 361.0,226.2 362.0,226.3 363.0,226.5 364.0,226.6 365.0,226.7 366.0,226.9 367.0,227.0 368.0,227.2 369.0,227.3 370.0,227.5 371.0,227.6 372.0,227.7 373.0,227.9 374.0,228.0 375.0,228.2 376.0,228.3 377.0,228.5 378.0,228.6 379.0,228.8 380.0,228.9 381.0,229.0 382.0,229.2 383.0,229.3 384.0,229.5 385.0,229.6 386.0,229.8 387.0,229.9 388.0,230.0 389.0,230.2 390.0,230.3 391.0,230.5 392.0,230.6 393.0,230.8 394.0,230.9 395.0,231.1 396.0,231.2 397.0,231.3 398.0,231.5 399.0,231.6 400.0,231.8 401.0,231.9 402.0,232.1 403.0,232.2 404.0,232.3 405.0,232.5 406.0,232.6 407.0,232.8 408.0,232.9 409.0,233.1 410.0,233.2 411.0,233.3 412.0,233.5 413.0,233.6 414.0,233.8 415.0,233.9 416.0,234.1 417.0,234.3 418.0,234.5 419.0,234.6 420.0,234.8 421.0,235.0 422.0,235.2 423.0,235.3 424.0,235.5 425.0,235.7 426.0,235.8 427.0,236.0 428.0,236.2 429.0,236.4 430.0,236.5 431.0,236.7 432.0,236.9 433.0,237.0 434.0,237.2 435.0,237.4 436.0,237.6 437.0,237.7 438.0,237.9 439.0,238.1 440.0,238.3 441.0,238.5 442.0,238.7 443.0,239.0 444.0,239.2 445.0,239.4 446.0,239.7 447.0,239.9 448.0,240.2 449.0,240.4 450.0,240.6 451.0,240.9 452.0,241.1 453.0,241.4 454.0,241.6 455.0,241.8 456.0,242.1 457.0,242.3 458.0,242.6 459.0,242.8 460.0,243.0 461.0,243.3 462.0,243.5" fill="none" stroke="#10e010" stroke-width="1.5" stroke-linejoin="round" shape-rendering="auto"/><rect x="255" y="216" width="1" height="42" fill="#20c820"/><rect x="264" y="218" width="1" height="29" fill="#20c820"/><rect x="237" y="222" width="1" height="27" fill="#20c820"/><rect x="48" y="243" width="1" height="8" fill="#20c820"/><rect x="463" y="131" width="1" height="112" fill="#c8c8c8"/><rect x="466" y="264" width="4" height="1" fill="#00f"/><rect x="466" y="240" width="4" height="1" fill="#00f"/><rect x="466" y="216" width="4" height="1" fill="#00f"/><rect x="466" y="192" width="4" height="1" fill="#00f"/><rect x="466" y="168" width="4" height="1" fill="#00f"/><rect x="466" y="144" width="4" height="1" fill="#00f"/><rect x="466" y="258" width="2" height="1" fill="#00f"/><rect x="466" y="252" width="2" height="1" fill="#00f"/><rect x="466" y="246" width="2" height="1" fill="#00f"/><rect x="466" y="234" width="2" height="1" fill="#00f"/><rect x="466" y="228" width="2" height="1" fill="#00f"/><rect x="466" y="222" width="2" height="1" fill="#00f"/><rect x="466" y="210" width="2" height="1" fill="#00f"/><rect x="466" y="204" width="2" height="1" fill="#00f"/><rect x="466" y="198" width="2" height="1" fill="#00f"/><rect x="466" y="186" width="2" height="1" fill="#00f"/><rect x="466" y="180" width="2" height="1" fill="#00f"/><rect x="466" y="174" width="2" height="1" fill="#00f"/><rect x="466" y="162" width="2" height="1" fill="#00f"/><rect x="466" y="156" width="2" height="1" fill="#00f"/><rect x="466" y="150" width="2" height="1" fill="#00f"/><rect x="466" y="138" width="2" height="1" fill="#00f"/><rect x="466" y="132" width="2" height="1" fill="#00f"/><rect x="46" y="291" width="422" height="136" fill="#000"/><rect x="48" y="293" width="416" height="133" fill="url(#bg)"/><rect x="45" y="293" width="421" height="1" fill="#00f"/><rect x="46" y="307" width="420" height="1" fill="#0000b8"/><rect x="45" y="320" width="421" height="1" fill="#00f"/><rect x="46" y="333" width="420" height="1" fill="#0000b8"/><rect x="45" y="347" width="421" height="1" fill="#00f"/><rect x="46" y="360" width="420" height="1" fill="#0000b8"/><rect x="45" y="373" width="421" height="1" fill="#00f"/><rect x="46" y="387" width="420" height="1" fill="#0000b8"/><rect x="45" y="400" width="421" height="1" fill="#00f"/><rect x="46" y="413" width="420" height="1" fill="#0000b8"/><rect x="45" y="426" width="421" height="1" fill="#00f"/><rect x="58" y="293" width="1" height="133" fill="#0000b8"/><rect x="68" y="293" width="1" height="133" fill="#0000b8"/><rect x="79" y="293" width="1" height="133" fill="#0000b8"/><rect x="89" y="293" width="1" height="133" fill="#0000b8"/><rect x="100" y="293" width="1" height="133" fill="#00f"/><rect x="110" y="293" width="1" height="133" fill="#0000b8"/><rect x="121" y="293" width="1" height="133" fill="#0000b8"/><rect x="131" y="293" width="1" height="133" fill="#0000b8"/><rect x="141" y="293" width="1" height="133" fill="#0000b8"/><rect x="152" y="293" width="1" height="133" fill="#00f"/><rect x="162" y="293" width="1" height="133" fill="#0000b8"/><rect x="173" y="293" width="1" height="133" fill="#0000b8"/><rect x="183" y="293" width="1" height="133" fill="#0000b8"/><rect x="194" y="293" width="1" height="133" fill="#0000b8"/><rect x="204" y="293" width="1" height="133" fill="#00f"/><rect x="215" y="293" width="1" height="133" fill="#0000b8"/><rect x="225" y="293" width="1" height="133" fill="#0000b8"/><rect x="236" y="293" width="1" height="133" fill="#0000b8"/><rect x="246" y="293" width="1" height="133" fill="#0000b8"/><rect x="256" y="293" width="1" height="133" fill="#00f"/><rect x="267" y="293" width="1" height="133" fill="#0000b8"/><rect x="277" y="293" width="1" height="133" fill="#0000b8"/><rect x="288" y="293" width="1" height="133" fill="#0000b8"/><rect x="298" y="293" width="1" height="133" fill="#0000b8"/><rect x="309" y="293" width="1" height="133" fill="#00f"/><rect x="319" y="293" width="1" height="133" fill="#0000b8"/><rect x="330" y="293" width="1" height="133" fill="#0000b8"/><rect x="340" y="293" width="1" height="133" fill="#0000b8"/><rect x="350" y="293" width="1" height="133" fill="#0000b8"/><rect x="361" y="293" width="1" height="133" fill="#00f"/><rect x="371" y="293" width="1" height="133" fill="#0000b8"/><rect x="382" y="293" width="1" height="133" fill="#0000b8"/><rect x="392" y="293" width="1" height="133" fill="#0000b8"/><rect x="403" y="293" width="1" height="133" fill="#0000b8"/><rect x="413" y="293" width="1" height="133" fill="#00f"/><rect x="424" y="293" width="1" height="133" fill="#0000b8"/><rect x="434" y="293" width="1" height="133" fill="#0000b8"/><rect x="444" y="293" width="1" height="133" fill="#0000b8"/><rect x="455" y="293" width="1" height="133" fill="#0000b8"/><rect x="53" y="368.3" width="1" height="57.7" fill="#f00"/><rect x="57" y="382.9" width="1" height="43.1" fill="#f00"/><rect x="66" y="360.6" width="1" height="65.4" fill="#f00"/><rect x="76" y="381.4" width="1" height="44.6" fill="#f00"/><rect x="80" y="370.1" width="1" height="55.9" fill="#f00"/><rect x="83" y="387.8" width="1" height="38.2" fill="#f00"/><rect x="105" y="369.1" width="1" height="56.9" fill="#f00"/><rect x="108" y="384.2" width="1" height="41.8" fill="#f00"/><rect x="109" y="365.0" width="1" height="61.0" fill="#f00"/><rect x="113" y="368.5" width="1" height="57.5" fill="#f00"/><rect x="114" y="373.3" width="1" height="52.7" fill="#f00"/><rect x="115" y="373.3" width="1" height="52.7" fill="#f00"/><rect x="119" y="377.7" width="1" height="48.3" fill="#f00"/><rect x="120" y="382.3" width="1" height="43.7" fill="#f00"/><rect x="121" y="373.7" width="1" height="52.3" fill="#f00"/><rect x="127" y="380.0" width="1" height="46.0" fill="#f00"/><rect x="136" y="364.5" width="1" height="61.5" fill="#f00"/><rect x="139" y="372.4" width="1" height="53.6" fill="#f00"/><rect x="140" y="376.6" width="1" height="49.4" fill="#f00"/><rect x="143" y="362.4" width="1" height="63.6" fill="#f00"/><rect x="144" y="370.1" width="1" height="55.9" fill="#f00"/><rect x="146" y="360.3" width="1" height="65.7" fill="#f00"/><rect x="147" y="363.1" width="1" height="62.9" fill="#f00"/><rect x="153" y="367.1" width="1" height="58.9" fill="#f00"/><rect x="155" y="362.1" width="1" height="63.9" fill="#f00"/><rect x="161" y="379.7" width="1" height="46.3" fill="#f00"/><rect x="162" y="365.2" width="1" height="60.8" fill="#f00"/><rect x="165" y="359.2" width="1" height="66.8" fill="#f00"/><rect x="166" y="360.2" width="1" height="65.8" fill="#f00"/><rect x="167" y="362.0" width="1" height="64.0" fill="#f00"/><rect x="171" y="369.6" width="1" height="56.4" fill="#f00"/><rect x="172" y="372.2" width="1" height="53.8" fill="#f00"/><rect x="174" y="361.3" width="1" height="64.7" fill="#f00"/><rect x="176" y="373.6" width="1" height="52.4" fill="#f00"/><rect x="182" y="365.3" width="1" height="60.7" fill="#f00"/><rect x="183" y="380.3" width="1" height="45.7" fill="#f00"/><rect x="200" y="372.7" width="1" height="53.3" fill="#f00"/><rect x="201" y="373.0" width="1" height="53.0" fill="#f00"/><rect x="208" y="364.1" width="1" height="61.9" fill="#f00"/><rect x="209" y="347.1" width="1" height="78.9" fill="#f00"/><rect x="210" y="369.8" width="1" height="56.2" fill="#f00"/><rect x="211" y="371.3" width="1" height="54.7" fill="#f00"/><rect x="215" y="340.3" width="1" height="85.7" fill="#f00"/><rect x="216" y="369.5" width="1" height="56.5" fill="#f00"/><rect x="224" y="377.8" width="1" height="48.2" fill="#f00"/><rect x="228" y="364.5" width="1" height="61.5" fill="#f00"/><rect x="232" y="366.3" width="1" height="59.7" fill="#f00"/><rect x="238" y="366.3" width="1" height="59.7" fill="#f00"/><rect x="239" y="370.2" width="1" height="55.8" fill="#f00"/><rect x="245" y="357.0" width="1" height="69.0" fill="#f00"/><rect x="256" y="345.7" width="1" height="80.3" fill="#f00"/><path d="M48,426L48,379.9L49,379.9L49,376.8L50,376.8L50,389.7L51,389.7L51,383.8L52,383.8L52,379.5L53,379.5L53,370.1L54,370.1L54,383.9L55,383.9L55,390.6L56,390.6L56,383.6L57,383.6L57,386.4L58,386.4L58,384.7L59,384.7L59,390.3L60,390.3L60,381.7L61,381.7L61,392.7L62,392.7L62,386.4L63,386.4L63,385.4L64,385.4L64,395.0L65,395.0L65,380.2L66,380.2L66,369.3L67,369.3L67,393.4L68,393.4L68,378.9L69,378.9L69,381.4L70,381.4L70,377.5L71,377.5L71,381.7L72,381.7L72,385.0L73,385.0L73,379.5L74,379.5L74,387.5L75,387.5L75,385.9L76,385.9L76,387.4L77,387.4L77,354.2L78,354.2L78,376.3L79,376.3L79,378.3L80,378.3L80,374.8L81,374.8L81,381.7L82,381.7L82,387.6L83,387.6L83,389.3L84,389.3L84,375.9L85,375.9L85,379.9L86,379.9L86,384.5L87,384.5L87,350.2L88,350.2L88,377.8L89,377.8L89,386.5L90,386.5L90,388.0L91,388.0L91,384.4L92,384.4L92,384.6L93,384.6L93,377.7L94,377.7L94,376.4L95,376.4L95,377.0L96,377.0L96,380.1L97,380.1L97,383.1L98,383.1L98,389.6L99,389.6L99,375.5L100,375.5L100,376.9L101,376.9L101,382.9L102,382.9L102,378.4L103,378.4L103,375.5L104,375.5L104,386.4L105,386.4L105,374.9L106,374.9L106,373.8L107,373.8L107,387.3L108,387.3L108,388.5L109,388.5L109,373.4L110,373.4L110,374.5L111,374.5L111,384.1L112,384.1L112,368.4L113,368.4L113,378.2L114,378.2L114,376.7L115,376.7L115,378.4L116,378.4L116,372.3L117,372.3L117,367.3L118,367.3L118,369.4L119,369.4L119,387.3L120,387.3L120,385.6L121,385.6L121,383.3L122,383.3L122,371.1L123,371.1L123,379.5L124,379.5L124,376.6L125,376.6L125,369.8L126,369.8L126,385.7L127,385.7L127,383.8L128,383.8L128,382.1L129,382.1L129,362.6L130,362.6L130,373.7L131,373.7L131,384.6L132,384.6L132,385.6L133,385.6L133,383.6L134,383.6L134,369.6L135,369.6L135,378.8L136,378.8L136,370.3L137,370.3L137,370.6L138,370.6L138,368.3L139,368.3L139,376.1L140,376.1L140,381.0L141,381.0L141,376.4L142,376.4L142,336.9L143,336.9L143,368.1L144,368.1L144,378.3L145,378.3L145,315.9L146,315.9L146,370.6L147,370.6L147,372.7L148,372.7L148,380.8L149,380.8L149,380.0L150,380.0L150,376.1L151,376.1L151,380.5L152,380.5L152,370.6L153,370.6L153,372.3L154,372.3L154,367.4L155,367.4L155,370.9L156,370.9L156,376.3L157,376.3L157,381.4L158,381.4L158,380.4L159,380.4L159,368.3L160,368.3L160,320.9L161,320.9L161,382.8L162,382.8L162,375.5L163,375.5L163,370.5L164,370.5L164,362.4L165,362.4L165,369.1L166,369.1L166,367.8L167,367.8L167,371.3L168,371.3L168,372.3L169,372.3L169,383.4L170,383.4L170,372.5L171,372.5L171,375.2L172,375.2L172,380.8L173,380.8L173,380.1L174,380.1L174,366.3L175,366.3L175,380.6L176,380.6L176,378.4L177,378.4L177,377.8L178,377.8L178,370.6L179,370.6L179,381.2L180,381.2L180,383.3L181,383.3L181,381.4L182,381.4L182,371.5L183,371.5L183,383.8L184,383.8L184,374.4L185,374.4L185,375.4L186,375.4L186,377.8L187,377.8L187,378.3L188,378.3L188,359.2L189,359.2L189,383.6L190,383.6L190,378.8L191,378.8L191,377.0L192,377.0L192,335.6L193,335.6L193,375.0L194,375.0L194,379.0L195,379.0L195,377.1L196,377.1L196,382.4L197,382.4L197,332.4L198,332.4L198,372.4L199,372.4L199,369.9L200,369.9L200,375.7L201,375.7L201,376.3L202,376.3L202,373.5L203,373.5L203,367.9L204,367.9L204,383.8L205,383.8L205,378.3L206,378.3L206,384.5L207,384.5L207,364.1L208,364.1L208,372.6L209,372.6L209,353.3L210,353.3L210,377.2L211,377.2L211,373.2L212,373.2L212,378.6L213,378.6L213,378.5L214,378.5L214,384.6L215,384.6L215,348.9L216,348.9L216,379.7L217,379.7L217,380.1L218,380.1L218,378.1L219,378.1L219,381.3L220,381.3L220,379.0L221,379.0L221,371.8L222,371.8L222,353.2L223,353.2L223,368.5L224,368.5L224,379.5L225,379.5L225,353.6L226,353.6L226,384.1L227,384.1L227,374.2L228,374.2L228,368.7L229,368.7L229,380.7L230,380.7L230,381.8L231,381.8L231,370.0L232,370.0L232,372.6L233,372.6L233,366.6L234,366.6L234,368.8L235,368.8L235,382.0L236,382.0L236,383.7L237,383.7L237,378.7L238,378.7L238,368.4L239,368.4L239,373.3L240,373.3L240,383.2L241,383.2L241,376.3L242,376.3L242,375.2L243,375.2L243,383.2L244,383.2L244,371.9L245,371.9L245,366.3L246,366.3L246,377.5L247,377.5L247,375.1L248,375.1L248,377.8L249,377.8L249,366.5L250,366.5L250,368.9L251,368.9L251,366.7L252,366.7L252,377.6L253,377.6L253,378.9L254,378.9L254,377.7L255,377.7L255,383.3L256,383.3L256,353.8L257,353.8L257,426Z" fill="#f0f"/><rect x="48" y="389.1" width="1" height="36.9" fill="#ff0050"/><rect x="50" y="394.4" width="1" height="6.5" fill="#180018"/><rect x="51" y="394.2" width="1" height="3.4" fill="#180018"/><rect x="52" y="387.8" width="1" height="24.2" fill="#ff2060"/><rect x="58" y="386.8" width="1" height="27.5" fill="#ff2060"/><rect x="59" y="400.1" width="1" height="3.6" fill="#180018"/><rect x="60" y="387.0" width="1" height="4.7" fill="#180018"/><rect x="62" y="394.6" width="1" height="31.4" fill="#ff0020"/><rect x="64" y="398.5" width="1" height="20.5" fill="#ff0020"/><rect x="65" y="387.0" width="1" height="4.9" fill="#180018"/><rect x="66" y="381.6" width="1" height="4.4" fill="#180018"/><rect x="68" y="387.6" width="1" height="7.5" fill="#180018"/><rect x="69" y="390.9" width="1" height="3.8" fill="#180018"/><rect x="70" y="378.3" width="1" height="6.2" fill="#180018"/><rect x="72" y="395.7" width="1" height="6.6" fill="#180018"/><rect x="75" y="395.5" width="1" height="3.0" fill="#180018"/><rect x="77" y="366.9" width="1" height="5.5" fill="#180018"/><rect x="78" y="380.1" width="1" height="35.3" fill="#ff0030"/><rect x="79" y="381.2" width="1" height="5.1" fill="#180018"/><rect x="80" y="382.3" width="1" height="6.0" fill="#180018"/><rect x="83" y="396.9" width="1" height="4.2" fill="#180018"/><rect x="86" y="386.5" width="1" height="5.8" fill="#180018"/><rect x="91" y="386.1" width="1" height="4.4" fill="#180018"/><rect x="93" y="386.8" width="1" height="5.3" fill="#180018"/><rect x="95" y="389.6" width="1" height="8.3" fill="#180018"/><rect x="96" y="390.0" width="1" height="5.4" fill="#180018"/><rect x="99" y="386.3" width="1" height="9.0" fill="#180018"/><rect x="102" y="387.9" width="1" height="8.1" fill="#180018"/><rect x="103" y="384.8" width="1" height="41.2" fill="#ff2060"/><rect x="106" y="379.1" width="1" height="46.9" fill="#ff2060"/><rect x="107" y="397.4" width="1" height="6.1" fill="#180018"/><rect x="109" y="380.2" width="1" height="32.8" fill="#ff0020"/><rect x="110" y="382.4" width="1" height="43.6" fill="#ff0030"/><rect x="111" y="389.5" width="1" height="36.5" fill="#ff2060"/><rect x="112" y="384.5" width="1" height="8.4" fill="#180018"/><rect x="116" y="378.7" width="1" height="2.2" fill="#180018"/><rect x="119" y="395.7" width="1" height="30.3" fill="#ff0030"/><rect x="123" y="385.6" width="1" height="40.4" fill="#ff2060"/><rect x="124" y="382.6" width="1" height="38.6" fill="#ff0050"/><rect x="126" y="394.8" width="1" height="31.2" fill="#ff0020"/><rect x="129" y="373.3" width="1" height="4.2" fill="#180018"/><rect x="136" y="375.9" width="1" height="5.8" fill="#180018"/><rect x="137" y="374.5" width="1" height="51.5" fill="#ff0020"/><rect x="139" y="383.7" width="1" height="7.0" fill="#180018"/><rect x="142" y="353.5" width="1" height="57.4" fill="#ff0020"/><rect x="144" y="379.0" width="1" height="47.0" fill="#ff0050"/><rect x="146" y="380.1" width="1" height="45.9" fill="#ff0020"/><rect x="147" y="381.8" width="1" height="44.2" fill="#ff0030"/><rect x="148" y="383.3" width="1" height="42.7" fill="#ff2060"/><rect x="151" y="383.2" width="1" height="4.0" fill="#180018"/><rect x="156" y="379.3" width="1" height="46.7" fill="#ff0050"/><rect x="157" y="389.3" width="1" height="30.4" fill="#ff0050"/><rect x="158" y="380.6" width="1" height="43.6" fill="#ff0050"/><rect x="161" y="386.5" width="1" height="39.5" fill="#ff0030"/><rect x="163" y="374.8" width="1" height="51.2" fill="#ff0020"/><rect x="164" y="374.2" width="1" height="7.2" fill="#180018"/><rect x="165" y="378.8" width="1" height="47.2" fill="#ff0020"/><rect x="167" y="380.8" width="1" height="35.5" fill="#ff2060"/><rect x="168" y="385.1" width="1" height="2.5" fill="#180018"/><rect x="169" y="385.3" width="1" height="3.4" fill="#180018"/><rect x="171" y="380.4" width="1" height="37.5" fill="#ff0020"/><rect x="172" y="391.7" width="1" height="6.5" fill="#180018"/><rect x="176" y="383.2" width="1" height="5.5" fill="#180018"/><rect x="178" y="377.9" width="1" height="8.6" fill="#180018"/><rect x="180" y="390.7" width="1" height="4.7" fill="#180018"/><rect x="183" y="391.0" width="1" height="27.7" fill="#ff2060"/><rect x="184" y="377.6" width="1" height="48.4" fill="#ff2060"/><rect x="190" y="382.3" width="1" height="8.1" fill="#180018"/><rect x="192" y="340.2" width="1" height="71.8" fill="#ff2060"/><rect x="194" y="382.2" width="1" height="4.1" fill="#180018"/><rect x="196" y="394.5" width="1" height="8.8" fill="#180018"/><rect x="197" y="334.9" width="1" height="2.8" fill="#180018"/><rect x="198" y="379.4" width="1" height="45.2" fill="#ff0030"/><rect x="199" y="378.3" width="1" height="47.7" fill="#ff0030"/><rect x="201" y="380.7" width="1" height="6.7" fill="#180018"/><rect x="203" y="374.5" width="1" height="51.5" fill="#ff0020"/><rect x="204" y="392.7" width="1" height="33.3" fill="#ff0020"/><rect x="206" y="388.0" width="1" height="4.6" fill="#180018"/><rect x="207" y="376.4" width="1" height="49.6" fill="#ff0030"/><rect x="209" y="366.9" width="1" height="57.3" fill="#ff0020"/><rect x="213" y="384.9" width="1" height="39.7" fill="#ff0030"/><rect x="215" y="362.6" width="1" height="53.8" fill="#ff2060"/><rect x="217" y="384.5" width="1" height="35.4" fill="#ff0050"/><rect x="220" y="391.3" width="1" height="2.8" fill="#180018"/><rect x="223" y="378.8" width="1" height="33.6" fill="#ff0030"/><rect x="224" y="384.1" width="1" height="33.5" fill="#ff0050"/><rect x="225" y="366.0" width="1" height="51.1" fill="#ff0030"/><rect x="226" y="391.2" width="1" height="34.8" fill="#ff0030"/><rect x="227" y="380.2" width="1" height="2.9" fill="#180018"/><rect x="228" y="381.4" width="1" height="38.0" fill="#ff2060"/><rect x="229" y="389.8" width="1" height="36.2" fill="#ff0050"/><rect x="231" y="380.1" width="1" height="45.9" fill="#ff0050"/><rect x="235" y="385.0" width="1" height="8.8" fill="#180018"/><rect x="236" y="386.9" width="1" height="5.4" fill="#180018"/><rect x="237" y="389.3" width="1" height="2.6" fill="#180018"/><rect x="238" y="377.7" width="1" height="48.3" fill="#ff0020"/><rect x="240" y="392.4" width="1" height="30.7" fill="#ff0050"/><rect x="243" y="384.7" width="1" height="41.3" fill="#ff0030"/><rect x="247" y="383.2" width="1" height="42.8" fill="#ff0030"/><rect x="249" y="367.4" width="1" height="58.6" fill="#ff0050"/><rect x="253" y="380.8" width="1" height="45.2" fill="#ff0050"/><rect x="256" y="364.0" width="1" height="62.0" fill="#ff0020"/><rect x="252" y="358.2" width="1" height="67.8" fill="#ff00a0"/><rect x="253" y="311.4" width="1" height="114.6" fill="#ff0058"/><rect x="254" y="334.2" width="1" height="91.8" fill="#ff0078"/><rect x="255" y="356.3" width="1" height="69.7" fill="#ff00c0"/><rect x="67" y="422" width="1" height="4" fill="#ffe020"/><rect x="122" y="422" width="1" height="4" fill="#ffe020"/><rect x="257" y="416.3" width="1" height="9.7" fill="#ff0030"/><rect x="258" y="416.8" width="1" height="9.2" fill="#ff6000"/><rect x="259" y="415.7" width="1" height="10.3" fill="#ff2000"/><rect x="260" y="416.1" width="1" height="9.9" fill="#ff6000"/><rect x="261" y="416.9" width="1" height="9.1" fill="#ff0030"/><rect x="262" y="417.0" width="1" height="9.0" fill="#ff6000"/><rect x="263" y="416.6" width="1" height="9.4" fill="#ffe000"/><rect x="264" y="418.4" width="1" height="7.6" fill="#ff2000"/><rect x="265" y="417.2" width="1" height="8.8" fill="#ff0030"/><rect x="266" y="417.4" width="1" height="8.6" fill="#ff6000"/><rect x="267" y="415.1" width="1" height="10.9" fill="#ffe000"/><rect x="268" y="416.0" width="1" height="10.0" fill="#ff2000"/><rect x="269" y="418.1" width="1" height="7.9" fill="#ffc000"/><rect x="270" y="415.6" width="1" height="10.4" fill="#ff0030"/><rect x="271" y="415.8" width="1" height="10.2" fill="#ff0030"/><rect x="272" y="417.1" width="1" height="8.9" fill="#ff2000"/><rect x="273" y="416.4" width="1" height="9.6" fill="#ff2000"/><rect x="274" y="417.5" width="1" height="8.5" fill="#ff0030"/><rect x="275" y="416.8" width="1" height="9.2" fill="#ffc000"/><rect x="276" y="416.2" width="1" height="9.8" fill="#ffc000"/><rect x="277" y="418.4" width="1" height="7.6" fill="#ff0030"/><rect x="278" y="418.9" width="1" height="7.1" fill="#ffc000"/><rect x="279" y="419.2" width="1" height="6.8" fill="#ffe000"/><rect x="280" y="416.9" width="1" height="9.1" fill="#ff0030"/><rect x="281" y="417.3" width="1" height="8.7" fill="#ffc000"/><rect x="282" y="418.2" width="1" height="7.8" fill="#ffe000"/><rect x="283" y="416.8" width="1" height="9.2" fill="#ffc000"/><rect x="284" y="418.7" width="1" height="7.3" fill="#ff0030"/><rect x="285" y="417.8" width="1" height="8.2" fill="#ffc000"/><rect x="286" y="418.8" width="1" height="7.2" fill="#ffc000"/><rect x="287" y="419.8" width="1" height="6.2" fill="#ffb000"/><rect x="288" y="416.7" width="1" height="9.3" fill="#c0ff00"/><rect x="289" y="419.0" width="1" height="7.0" fill="#ffb000"/><rect x="290" y="417.1" width="1" height="8.9" fill="#c0ff00"/><rect x="291" y="420.4" width="1" height="5.6" fill="#c0ff00"/><rect x="292" y="417.3" width="1" height="8.7" fill="#ffff00"/><rect x="293" y="417.8" width="1" height="8.2" fill="#ffe000"/><rect x="294" y="420.4" width="1" height="5.6" fill="#ffb000"/><rect x="295" y="418.0" width="1" height="8.0" fill="#ffff00"/><rect x="296" y="418.9" width="1" height="7.1" fill="#ffff00"/><rect x="297" y="417.9" width="1" height="8.1" fill="#ffb000"/><rect x="298" y="417.9" width="1" height="8.1" fill="#ffff00"/><rect x="299" y="417.8" width="1" height="8.2" fill="#ffff00"/><rect x="300" y="419.3" width="1" height="6.7" fill="#c0ff00"/><rect x="301" y="421.4" width="1" height="4.6" fill="#c0ff00"/><rect x="302" y="419.2" width="1" height="6.8" fill="#c0ff00"/><rect x="303" y="419.1" width="1" height="6.9" fill="#ffb000"/><rect x="304" y="418.2" width="1" height="7.8" fill="#ffb000"/><rect x="305" y="421.0" width="1" height="5.0" fill="#ffff00"/><rect x="306" y="419.3" width="1" height="6.7" fill="#ffe000"/><rect x="307" y="420.6" width="1" height="5.4" fill="#ffff00"/><rect x="308" y="421.2" width="1" height="4.8" fill="#ffe000"/><rect x="309" y="418.8" width="1" height="7.2" fill="#c0ff00"/><rect x="310" y="420.5" width="1" height="5.5" fill="#c0ff00"/><rect x="311" y="421.3" width="1" height="4.7" fill="#ffe000"/><rect x="312" y="421.3" width="1" height="4.7" fill="#ffff00"/><rect x="313" y="420.0" width="1" height="6.0" fill="#c0ff00"/><rect x="314" y="421.4" width="1" height="4.6" fill="#ffb000"/><rect x="315" y="419.9" width="1" height="6.1" fill="#ffe000"/><rect x="316" y="421.0" width="1" height="5.0" fill="#c0ff00"/><rect x="317" y="421.9" width="1" height="4.1" fill="#c0ff00"/><rect x="318" y="422.2" width="1" height="3.8" fill="#ffff00"/><rect x="319" y="420.1" width="1" height="5.9" fill="#c0ff00"/><rect x="320" y="419.5" width="1" height="6.5" fill="#ffb000"/><rect x="321" y="421.9" width="1" height="4.1" fill="#c0ff00"/><rect x="322" y="422.4" width="1" height="3.6" fill="#ffb000"/><rect x="323" y="420.5" width="1" height="5.5" fill="#ffe000"/><rect x="324" y="420.1" width="1" height="5.9" fill="#ffe000"/><rect x="325" y="421.0" width="1" height="5.0" fill="#c0ff00"/><rect x="326" y="421.6" width="1" height="4.4" fill="#c0ff00"/><rect x="327" y="420.7" width="1" height="5.3" fill="#60ff00"/><rect x="328" y="421.9" width="1" height="4.1" fill="#60ff00"/><rect x="329" y="420.7" width="1" height="5.3" fill="#d0ff00"/><rect x="330" y="420.4" width="1" height="5.6" fill="#40ff20"/><rect x="331" y="422.1" width="1" height="3.9" fill="#40ff20"/><rect x="332" y="422.9" width="1" height="3.1" fill="#a0ff00"/><rect x="333" y="420.0" width="1" height="6.0" fill="#a0ff00"/><rect x="334" y="419.7" width="1" height="6.3" fill="#60ff00"/><rect x="335" y="419.1" width="1" height="6.9" fill="#a0ff00"/><rect x="336" y="420.1" width="1" height="5.9" fill="#40ff20"/><rect x="337" y="422.6" width="1" height="3.4" fill="#60ff00"/><rect x="338" y="420.6" width="1" height="5.4" fill="#d0ff00"/><rect x="339" y="423.0" width="1" height="3.0" fill="#40ff20"/><rect x="340" y="422.9" width="1" height="3.1" fill="#a0ff00"/><rect x="341" y="423.0" width="1" height="3.0" fill="#d0ff00"/><rect x="342" y="422.9" width="1" height="3.1" fill="#a0ff00"/><rect x="343" y="423.1" width="1" height="2.9" fill="#d0ff00"/><rect x="344" y="422.9" width="1" height="3.1" fill="#d0ff00"/><rect x="345" y="421.0" width="1" height="5.0" fill="#60ff00"/><rect x="346" y="420.7" width="1" height="5.3" fill="#40ff20"/><rect x="347" y="423.0" width="1" height="3.0" fill="#d0ff00"/><rect x="348" y="422.7" width="1" height="3.3" fill="#40ff20"/><rect x="349" y="423.2" width="1" height="2.8" fill="#40ff20"/><rect x="350" y="423.7" width="1" height="2.3" fill="#a0ff00"/><rect x="351" y="422.6" width="1" height="3.4" fill="#a0ff00"/><rect x="352" y="421.7" width="1" height="4.3" fill="#a0ff00"/><rect x="353" y="422.9" width="1" height="3.1" fill="#60ff00"/><rect x="354" y="417.2" width="1" height="8.8" fill="#a0ff00"/><rect x="355" y="421.1" width="1" height="4.9" fill="#d0ff00"/><rect x="356" y="422.2" width="1" height="3.8" fill="#a0ff00"/><rect x="357" y="421.4" width="1" height="4.6" fill="#60ff00"/><rect x="358" y="423.6" width="1" height="2.4" fill="#60ff00"/><rect x="359" y="422.4" width="1" height="3.6" fill="#40ff20"/><rect x="360" y="422.2" width="1" height="3.8" fill="#a0ff00"/><rect x="361" y="422.6" width="1" height="3.4" fill="#60ff00"/><rect x="362" y="420.8" width="1" height="5.2" fill="#40ff20"/><rect x="363" y="422.7" width="1" height="3.3" fill="#a0ff00"/><rect x="364" y="423.2" width="1" height="2.8" fill="#d0ff00"/><rect x="365" y="421.8" width="1" height="4.2" fill="#40ff20"/><rect x="366" y="421.2" width="1" height="4.8" fill="#40ff20"/><rect x="367" y="421.3" width="1" height="4.7" fill="#60ff00"/><rect x="368" y="421.4" width="1" height="4.6" fill="#a0ff00"/><rect x="369" y="422.9" width="1" height="3.1" fill="#60ff00"/><rect x="370" y="421.8" width="1" height="4.2" fill="#40ff20"/><rect x="371" y="419.5" width="1" height="6.5" fill="#d0ff00"/><rect x="372" y="422.9" width="1" height="3.1" fill="#a0ff00"/><rect x="373" y="423.5" width="1" height="2.5" fill="#60ff00"/><rect x="374" y="422.7" width="1" height="3.3" fill="#60ff00"/><rect x="375" y="423.1" width="1" height="2.9" fill="#40ff20"/><rect x="376" y="423.4" width="1" height="2.6" fill="#a0ff00"/><rect x="377" y="423.6" width="1" height="2.4" fill="#40ff20"/><rect x="378" y="422.4" width="1" height="3.6" fill="#40ff20"/><rect x="379" y="423.6" width="1" height="2.4" fill="#d0ff00"/><rect x="380" y="421.9" width="1" height="4.1" fill="#60ff00"/><rect x="381" y="423.5" width="1" height="2.5" fill="#40ff20"/><rect x="382" y="424.1" width="1" height="1.9" fill="#d0ff00"/><rect x="383" y="422.1" width="1" height="3.9" fill="#d0ff00"/><rect x="384" y="421.6" width="1" height="4.4" fill="#d0ff00"/><rect x="385" y="423.5" width="1" height="2.5" fill="#40ff20"/><rect x="386" y="422.7" width="1" height="3.3" fill="#60ff00"/><rect x="387" y="422.0" width="1" height="4.0" fill="#a0ff00"/><rect x="388" y="423.4" width="1" height="2.6" fill="#60ff00"/><rect x="389" y="422.7" width="1" height="3.3" fill="#40ff20"/><rect x="390" y="423.3" width="1" height="2.7" fill="#40ff20"/><rect x="391" y="423.9" width="1" height="2.1" fill="#60ff00"/><rect x="392" y="421.2" width="1" height="4.8" fill="#a0ff00"/><rect x="393" y="421.9" width="1" height="4.1" fill="#a0ff00"/><rect x="394" y="422.5" width="1" height="3.5" fill="#d0ff00"/><rect x="395" y="423.9" width="1" height="2.1" fill="#60ff00"/><rect x="396" y="422.4" width="1" height="3.6" fill="#40ff20"/><rect x="397" y="424.0" width="1" height="2.0" fill="#a0ff00"/><rect x="398" y="423.5" width="1" height="2.5" fill="#60ff00"/><rect x="399" y="421.7" width="1" height="4.3" fill="#60ff00"/><rect x="400" y="424.2" width="1" height="1.8" fill="#40ff20"/><rect x="401" y="422.7" width="1" height="3.3" fill="#a0ff00"/><rect x="402" y="422.2" width="1" height="3.8" fill="#40ff20"/><rect x="403" y="422.3" width="1" height="3.7" fill="#d0ff00"/><rect x="404" y="422.5" width="1" height="3.5" fill="#40ff20"/><rect x="405" y="422.0" width="1" height="4.0" fill="#a0ff00"/><rect x="406" y="422.3" width="1" height="3.7" fill="#60ff00"/><rect x="407" y="422.0" width="1" height="4.0" fill="#a0ff00"/><rect x="408" y="422.1" width="1" height="3.9" fill="#40ff20"/><rect x="409" y="423.1" width="1" height="2.9" fill="#a0ff00"/><rect x="410" y="422.6" width="1" height="3.4" fill="#a0ff00"/><rect x="411" y="424.1" width="1" height="1.9" fill="#d0ff00"/><rect x="412" y="422.8" width="1" height="3.2" fill="#a0ff00"/><rect x="413" y="422.0" width="1" height="4.0" fill="#a0ff00"/><rect x="414" y="421.7" width="1" height="4.3" fill="#40ff20"/><rect x="415" y="422.2" width="1" height="3.8" fill="#60ff00"/><rect x="416" y="421.9" width="1" height="4.1" fill="#40ff20"/><rect x="417" y="422.7" width="1" height="3.3" fill="#40ff20"/><rect x="418" y="420.2" width="1" height="5.8" fill="#d0ff00"/><rect x="419" y="422.9" width="1" height="3.1" fill="#a0ff00"/><rect x="420" y="422.9" width="1" height="3.1" fill="#40ff20"/><rect x="421" y="421.3" width="1" height="4.7" fill="#60ff00"/><rect x="422" y="423.2" width="1" height="2.8" fill="#60ff00"/><rect x="423" y="421.8" width="1" height="4.2" fill="#40ff20"/><rect x="424" y="421.8" width="1" height="4.2" fill="#a0ff00"/><rect x="425" y="423.2" width="1" height="2.8" fill="#a0ff00"/><rect x="426" y="422.1" width="1" height="3.9" fill="#40ff20"/><rect x="427" y="418.8" width="1" height="7.2" fill="#a0ff00"/><rect x="428" y="424.6" width="1" height="1.4" fill="#d0ff00"/><rect x="429" y="421.4" width="1" height="4.6" fill="#d0ff00"/><rect x="430" y="421.6" width="1" height="4.4" fill="#60ff00"/><rect x="431" y="421.5" width="1" height="4.5" fill="#40ff20"/><rect x="432" y="423.3" width="1" height="2.7" fill="#60ff00"/><rect x="433" y="421.8" width="1" height="4.2" fill="#a0ff00"/><rect x="434" y="421.7" width="1" height="4.3" fill="#d0ff00"/><rect x="435" y="424.6" width="1" height="1.4" fill="#40ff20"/><rect x="436" y="423.5" width="1" height="2.5" fill="#60ff00"/><rect x="437" y="423.9" width="1" height="2.1" fill="#60ff00"/><rect x="438" y="424.2" width="1" height="1.8" fill="#60ff00"/><rect x="439" y="423.1" width="1" height="2.9" fill="#d0ff00"/><rect x="440" y="422.8" width="1" height="3.2" fill="#d0ff00"/><rect x="441" y="423.0" width="1" height="3.0" fill="#60ff00"/><rect x="442" y="421.5" width="1" height="4.5" fill="#a0ff00"/><rect x="443" y="423.7" width="1" height="2.3" fill="#40ff20"/><rect x="444" y="421.6" width="1" height="4.4" fill="#40ff20"/><rect x="445" y="421.3" width="1" height="4.7" fill="#60ff00"/><rect x="446" y="423.7" width="1" height="2.3" fill="#40ff20"/><rect x="447" y="421.9" width="1" height="4.1" fill="#60ff00"/><rect x="448" y="421.6" width="1" height="4.4" fill="#a0ff00"/><rect x="449" y="424.1" width="1" height="1.9" fill="#d0ff00"/><rect x="450" y="421.8" width="1" height="4.2" fill="#40ff20"/><rect x="451" y="421.8" width="1" height="4.2" fill="#d0ff00"/><rect x="452" y="423.5" width="1" height="2.5" fill="#40ff20"/><rect x="453" y="421.5" width="1" height="4.5" fill="#d0ff00"/><rect x="454" y="421.7" width="1" height="4.3" fill="#d0ff00"/><rect x="455" y="423.1" width="1" height="2.9" fill="#a0ff00"/><rect x="456" y="420.9" width="1" height="5.1" fill="#d0ff00"/><rect x="457" y="423.3" width="1" height="2.7" fill="#a0ff00"/><rect x="458" y="424.4" width="1" height="1.6" fill="#d0ff00"/><rect x="459" y="422.8" width="1" height="3.2" fill="#a0ff00"/><rect x="460" y="421.5" width="1" height="4.5" fill="#a0ff00"/><rect x="461" y="424.3" width="1" height="1.7" fill="#d0ff00"/><rect x="462" y="421.4" width="1" height="4.6" fill="#40ff20"/><rect x="257" y="386.0" width="1" height="1.7" fill="#f0f"/><rect x="258" y="384.0" width="1" height="3.7" fill="#f0f"/><rect x="259" y="381.5" width="1" height="4.2" fill="#f0f"/><rect x="260" y="381.5" width="1" height="3.4" fill="#f0f"/><rect x="261" y="381.3" width="1" height="3.6" fill="#f0f"/><rect x="262" y="377.7" width="1" height="5.3" fill="#f0f"/><rect x="263" y="377.7" width="1" height="5.4" fill="#f0f"/><rect x="264" y="381.4" width="1" height="2.2" fill="#f0f"/><rect x="265" y="381.5" width="1" height="2.1" fill="#f0f"/><rect x="266" y="376.8" width="1" height="6.9" fill="#f0f"/><rect x="267" y="382.0" width="1" height="2.3" fill="#f0f"/><rect x="268" y="380.5" width="1" height="3.8" fill="#f0f"/><rect x="269" y="380.5" width="1" height="2.5" fill="#f0f"/><rect x="270" y="381.4" width="1" height="3.5" fill="#f0f"/><rect x="271" y="381.0" width="1" height="3.9" fill="#f0f"/><rect x="272" y="381.0" width="1" height="4.7" fill="#f0f"/><rect x="273" y="381.7" width="1" height="3.9" fill="#f0f"/><rect x="274" y="381.7" width="1" height="2.2" fill="#f0f"/><rect x="275" y="380.9" width="1" height="3.1" fill="#f0f"/><rect x="276" y="380.9" width="1" height="2.0" fill="#f0f"/><rect x="277" y="378.8" width="1" height="4.0" fill="#f0f"/><rect x="278" y="378.8" width="1" height="2.7" fill="#f0f"/><rect x="279" y="379.8" width="1" height="5.2" fill="#f0f"/><rect x="280" y="380.7" width="1" height="4.4" fill="#f0f"/><rect x="281" y="380.7" width="1" height="2.7" fill="#f0f"/><rect x="282" y="373.9" width="1" height="9.5" fill="#f0f"/><rect x="283" y="380.3" width="1" height="3.7" fill="#f0f"/><rect x="284" y="382.1" width="1" height="1.8" fill="#f0f"/><rect x="285" y="382.1" width="1" height="2.3" fill="#f0f"/><rect x="286" y="380.0" width="1" height="4.3" fill="#f0f"/><rect x="287" y="380.0" width="1" height="1.7" fill="#f0f"/><rect x="288" y="380.0" width="1" height="3.9" fill="#f0f"/><rect x="289" y="380.5" width="1" height="3.5" fill="#f0f"/><rect x="290" y="380.5" width="1" height="3.6" fill="#f0f"/><rect x="291" y="382.4" width="1" height="2.7" fill="#f0f"/><rect x="292" y="379.5" width="1" height="5.6" fill="#f0f"/><rect x="293" y="373.0" width="1" height="9.7" fill="#f0f"/><rect x="294" y="376.4" width="1" height="7.0" fill="#f0f"/><rect x="295" y="381.7" width="1" height="2.8" fill="#f0f"/><rect x="296" y="380.7" width="1" height="3.7" fill="#f0f"/><rect x="297" y="380.7" width="1" height="2.5" fill="#f0f"/><rect x="298" y="381.5" width="1" height="2.1" fill="#f0f"/><rect x="299" y="380.7" width="1" height="3.0" fill="#f0f"/><rect x="300" y="380.7" width="1" height="4.4" fill="#f0f"/><rect x="301" y="380.7" width="1" height="4.5" fill="#f0f"/><rect x="302" y="375.2" width="1" height="8.5" fill="#f0f"/><rect x="303" y="379.7" width="1" height="4.0" fill="#f0f"/><rect x="304" y="379.7" width="1" height="4.3" fill="#f0f"/><rect x="305" y="382.3" width="1" height="2.5" fill="#f0f"/><rect x="306" y="379.5" width="1" height="5.3" fill="#f0f"/><rect x="307" y="378.1" width="1" height="3.1" fill="#f0f"/><rect x="308" y="373.2" width="1" height="11.7" fill="#f0f"/><rect x="309" y="381.5" width="1" height="3.3" fill="#f0f"/><rect x="310" y="381.5" width="1" height="2.8" fill="#f0f"/><rect x="311" y="380.5" width="1" height="3.9" fill="#f0f"/><rect x="312" y="380.5" width="1" height="4.3" fill="#f0f"/><rect x="313" y="379.8" width="1" height="4.9" fill="#f0f"/><rect x="314" y="379.8" width="1" height="2.8" fill="#f0f"/><rect x="315" y="380.8" width="1" height="1.8" fill="#f0f"/><rect x="316" y="380.8" width="1" height="4.0" fill="#f0f"/><rect x="317" y="383.1" width="1" height="3.0" fill="#f0f"/><rect x="318" y="378.5" width="1" height="7.6" fill="#f0f"/><rect x="319" y="382.9" width="1" height="3.2" fill="#f0f"/><rect x="320" y="382.8" width="1" height="1.8" fill="#f0f"/><rect x="321" y="382.8" width="1" height="2.4" fill="#f0f"/><rect x="322" y="379.7" width="1" height="5.4" fill="#f0f"/><rect x="323" y="379.7" width="1" height="4.0" fill="#f0f"/><rect x="324" y="381.8" width="1" height="1.9" fill="#f0f"/><rect x="325" y="375.3" width="1" height="8.3" fill="#f0f"/><rect x="326" y="381.5" width="1" height="2.0" fill="#f0f"/><rect x="327" y="381.8" width="1" height="4.4" fill="#f0f"/><rect x="328" y="378.7" width="1" height="7.5" fill="#f0f"/><rect x="329" y="382.0" width="1" height="2.1" fill="#f0f"/><rect x="330" y="382.0" width="1" height="3.2" fill="#f0f"/><rect x="331" y="377.5" width="1" height="8.0" fill="#f0f"/><rect x="332" y="380.3" width="1" height="5.2" fill="#f0f"/><rect x="333" y="380.3" width="1" height="4.3" fill="#f0f"/><rect x="334" y="382.9" width="1" height="2.0" fill="#f0f"/><rect x="335" y="382.4" width="1" height="2.5" fill="#f0f"/><rect x="336" y="381.6" width="1" height="2.5" fill="#f0f"/><rect x="337" y="381.6" width="1" height="1.7" fill="#f0f"/><rect x="338" y="381.6" width="1" height="2.8" fill="#f0f"/><rect x="339" y="382.7" width="1" height="2.2" fill="#f0f"/><rect x="340" y="383.2" width="1" height="2.7" fill="#f0f"/><rect x="341" y="381.8" width="1" height="4.1" fill="#f0f"/><rect x="342" y="381.8" width="1" height="3.8" fill="#f0f"/><rect x="343" y="380.4" width="1" height="5.2" fill="#f0f"/><rect x="344" y="380.4" width="1" height="3.5" fill="#f0f"/><rect x="345" y="378.6" width="1" height="5.3" fill="#f0f"/><rect x="346" y="378.6" width="1" height="7.4" fill="#f0f"/><rect x="347" y="384.1" width="1" height="1.9" fill="#f0f"/><rect x="348" y="383.9" width="1" height="1.9" fill="#f0f"/><rect x="349" y="383.0" width="1" height="2.6" fill="#f0f"/><rect x="350" y="383.0" width="1" height="4.4" fill="#f0f"/><rect x="351" y="384.8" width="1" height="2.6" fill="#f0f"/><rect x="352" y="384.8" width="1" height="2.6" fill="#f0f"/><rect x="353" y="383.6" width="1" height="3.9" fill="#f0f"/><rect x="354" y="383.0" width="1" height="2.3" fill="#f0f"/><rect x="355" y="383.0" width="1" height="1.8" fill="#f0f"/><rect x="356" y="383.1" width="1" height="2.9" fill="#f0f"/><rect x="357" y="384.3" width="1" height="2.0" fill="#f0f"/><rect x="358" y="384.6" width="1" height="1.8" fill="#f0f"/><rect x="359" y="384.7" width="1" height="3.5" fill="#f0f"/><rect x="360" y="386.5" width="1" height="2.5" fill="#f0f"/><rect x="361" y="378.7" width="1" height="10.3" fill="#f0f"/><rect x="362" y="377.0" width="1" height="9.4" fill="#f0f"/><rect x="363" y="383.2" width="1" height="4.0" fill="#f0f"/><rect x="364" y="382.9" width="1" height="4.3" fill="#f0f"/><rect x="365" y="382.9" width="1" height="3.0" fill="#f0f"/><rect x="366" y="382.2" width="1" height="3.7" fill="#f0f"/><rect x="367" y="382.2" width="1" height="3.2" fill="#f0f"/><rect x="368" y="383.6" width="1" height="1.8" fill="#f0f"/><rect x="369" y="383.6" width="1" height="4.4" fill="#f0f"/><rect x="370" y="385.9" width="1" height="2.1" fill="#f0f"/><rect x="371" y="382.4" width="1" height="5.2" fill="#f0f"/><rect x="372" y="382.4" width="1" height="3.6" fill="#f0f"/><rect x="373" y="384.3" width="1" height="3.2" fill="#f0f"/><rect x="374" y="385.8" width="1" height="4.1" fill="#f0f"/><rect x="375" y="384.6" width="1" height="5.3" fill="#f0f"/><rect x="376" y="383.1" width="1" height="3.2" fill="#f0f"/><rect x="377" y="383.1" width="1" height="2.7" fill="#f0f"/><rect x="378" y="384.1" width="1" height="2.2" fill="#f0f"/><rect x="379" y="384.6" width="1" height="3.5" fill="#f0f"/><rect x="380" y="385.7" width="1" height="2.3" fill="#f0f"/><rect x="381" y="382.4" width="1" height="5.1" fill="#f0f"/><rect x="382" y="382.4" width="1" height="5.4" fill="#f0f"/><rect x="383" y="383.9" width="1" height="3.8" fill="#f0f"/><rect x="384" y="383.9" width="1" height="3.4" fill="#f0f"/><rect x="385" y="385.6" width="1" height="3.2" fill="#f0f"/><rect x="386" y="385.0" width="1" height="3.8" fill="#f0f"/><rect x="387" y="384.0" width="1" height="2.7" fill="#f0f"/><rect x="388" y="384.0" width="1" height="4.2" fill="#f0f"/><rect x="389" y="385.3" width="1" height="2.9" fill="#f0f"/><rect x="390" y="385.3" width="1" height="2.2" fill="#f0f"/><rect x="391" y="384.3" width="1" height="3.3" fill="#f0f"/><rect x="392" y="384.3" width="1" height="3.9" fill="#f0f"/><rect x="393" y="385.5" width="1" height="2.6" fill="#f0f"/><rect x="394" y="384.2" width="1" height="3.0" fill="#f0f"/><rect x="395" y="383.5" width="1" height="2.4" fill="#f0f"/><rect x="396" y="383.5" width="1" height="2.2" fill="#f0f"/><rect x="397" y="384.1" width="1" height="2.6" fill="#f0f"/><rect x="398" y="379.3" width="1" height="9.1" fill="#f0f"/><rect x="399" y="386.0" width="1" height="2.5" fill="#f0f"/><rect x="400" y="384.6" width="1" height="3.0" fill="#f0f"/><rect x="401" y="384.6" width="1" height="1.8" fill="#f0f"/><rect x="402" y="384.7" width="1" height="3.8" fill="#f0f"/><rect x="403" y="383.8" width="1" height="4.7" fill="#f0f"/><rect x="404" y="383.8" width="1" height="4.2" fill="#f0f"/><rect x="405" y="386.3" width="1" height="2.7" fill="#f0f"/><rect x="406" y="386.2" width="1" height="2.8" fill="#f0f"/><rect x="407" y="386.1" width="1" height="1.8" fill="#f0f"/><rect x="408" y="386.1" width="1" height="1.9" fill="#f0f"/><rect x="409" y="386.3" width="1" height="3.4" fill="#f0f"/><rect x="410" y="386.6" width="1" height="3.1" fill="#f0f"/><rect x="411" y="386.6" width="1" height="2.4" fill="#f0f"/><rect x="412" y="386.7" width="1" height="2.3" fill="#f0f"/><rect x="413" y="386.0" width="1" height="2.3" fill="#f0f"/><rect x="414" y="386.0" width="1" height="2.6" fill="#f0f"/><rect x="415" y="386.9" width="1" height="3.2" fill="#f0f"/><rect x="416" y="386.2" width="1" height="3.9" fill="#f0f"/><rect x="417" y="383.4" width="1" height="5.2" fill="#f0f"/><rect x="418" y="386.9" width="1" height="3.5" fill="#f0f"/><rect x="419" y="386.6" width="1" height="3.8" fill="#f0f"/><rect x="420" y="386.0" width="1" height="2.2" fill="#f0f"/><rect x="421" y="386.0" width="1" height="2.5" fill="#f0f"/><rect x="422" y="386.9" width="1" height="4.5" fill="#f0f"/><rect x="423" y="388.2" width="1" height="3.2" fill="#f0f"/><rect x="424" y="388.2" width="1" height="3.4" fill="#f0f"/><rect x="425" y="389.4" width="1" height="2.2" fill="#f0f"/><rect x="426" y="384.7" width="1" height="6.5" fill="#f0f"/><rect x="427" y="384.7" width="1" height="3.4" fill="#f0f"/><rect x="428" y="386.4" width="1" height="4.2" fill="#f0f"/><rect x="429" y="387.8" width="1" height="2.7" fill="#f0f"/><rect x="430" y="383.2" width="1" height="6.3" fill="#f0f"/><rect x="431" y="386.5" width="1" height="2.9" fill="#f0f"/><rect x="432" y="387.6" width="1" height="4.0" fill="#f0f"/><rect x="433" y="388.6" width="1" height="3.0" fill="#f0f"/><rect x="434" y="388.6" width="1" height="1.7" fill="#f0f"/><rect x="435" y="387.4" width="1" height="2.9" fill="#f0f"/><rect x="436" y="387.4" width="1" height="2.9" fill="#f0f"/><rect x="437" y="386.3" width="1" height="4.0" fill="#f0f"/><rect x="438" y="386.3" width="1" height="5.0" fill="#f0f"/><rect x="439" y="389.2" width="1" height="2.1" fill="#f0f"/><rect x="440" y="386.5" width="1" height="4.4" fill="#f0f"/><rect x="441" y="386.5" width="1" height="4.7" fill="#f0f"/><rect x="442" y="389.5" width="1" height="1.9" fill="#f0f"/><rect x="443" y="389.6" width="1" height="1.8" fill="#f0f"/><rect x="444" y="388.8" width="1" height="2.6" fill="#f0f"/><rect x="445" y="388.8" width="1" height="2.4" fill="#f0f"/><rect x="446" y="388.9" width="1" height="2.3" fill="#f0f"/><rect x="447" y="388.9" width="1" height="4.9" fill="#f0f"/><rect x="448" y="389.9" width="1" height="3.8" fill="#f0f"/><rect x="449" y="389.9" width="1" height="1.9" fill="#f0f"/><rect x="450" y="390.1" width="1" height="3.8" fill="#f0f"/><rect x="451" y="390.6" width="1" height="3.3" fill="#f0f"/><rect x="452" y="389.0" width="1" height="3.3" fill="#f0f"/><rect x="453" y="389.0" width="1" height="4.3" fill="#f0f"/><rect x="454" y="391.4" width="1" height="1.9" fill="#f0f"/><rect x="455" y="391.4" width="1" height="4.7" fill="#f0f"/><rect x="456" y="392.2" width="1" height="3.9" fill="#f0f"/><rect x="457" y="391.3" width="1" height="2.6" fill="#f0f"/><rect x="458" y="391.3" width="1" height="2.2" fill="#f0f"/><rect x="459" y="391.8" width="1" height="4.6" fill="#f0f"/><rect x="460" y="394.8" width="1" height="2.2" fill="#f0f"/><rect x="461" y="392.6" width="1" height="4.4" fill="#f0f"/><rect x="462" y="392.6" width="1" height="1.7" fill="#f0f"/><rect x="463" y="293" width="1" height="133" fill="#c8c8c8"/></svg>
<div class="gb" style="left:491px;top:124px;width:139px;height:84px"><i></i></div>
<div class="gb" style="left:491px;top:215px;width:139px;height:204px"><i></i></div>
<div class="gb" style="left:491px;top:425px;width:139px;height:26px"><i></i></div>
<div class="gb" style="left:491px;top:457px;width:139px;height:56px"><i></i></div>
<div class="sunk" style="left:500px;top:225px;width:84px;height:21px"></div>
<div class="btn" style="left:566px;top:227px;width:16px;height:17px"><svg class="abs" style="left:3px;top:5px" width="7" height="4" viewBox="0 0 7 4" shape-rendering="crispEdges"><path d="M0,0h7l-3.5,4z" fill="#000"/></svg></div>
<div class="btn" style="left:592px;top:224px;width:23px;height:23px"><div class="abs" style="left:3px;top:2px;width:14px;height:16px;box-sizing:border-box;border:1px solid #000;background:#fff"></div><svg class="abs" style="left:3px;top:2px" width="14" height="16" viewBox="0 0 14 16"><path d="M3.6,7.2V5.6Q3.6,4.2 5,4.2H7.5M10.4,8.8V10.4Q10.4,11.8 9,11.8H6.5" fill="none" stroke="#008000" stroke-width="1.5"/><path d="M7,1.6L10,4.2L7,6.8ZM7,9.2L4,11.8L7,14.4Z" fill="#008000"/></svg></div>
<div class="sunk" style="left:554px;top:251px;width:59px;height:19px"></div>
<div class="sunk" style="left:554px;top:274px;width:59px;height:19px"></div>
<div class="cb" style="left:502px;top:296px;background:#fff"></div>
<div class="cb" style="left:502px;top:314px;background:#fff"><svg width="7" height="7" viewBox="0 0 7 7" style="position:absolute;left:1px;top:1px" shape-rendering="crispEdges"><path d="M0,2v3l2,2l5,-5v-3l-5,5z" fill="#000"/></svg></div>
<div class="cb" style="left:502px;top:329px;background:#fff"><svg width="7" height="7" viewBox="0 0 7 7" style="position:absolute;left:1px;top:1px" shape-rendering="crispEdges"><path d="M0,2v3l2,2l5,-5v-3l-5,5z" fill="#000"/></svg></div>
<div class="cb" style="left:502px;top:345px;background:#fff"><svg width="7" height="7" viewBox="0 0 7 7" style="position:absolute;left:1px;top:1px" shape-rendering="crispEdges"><path d="M0,2v3l2,2l5,-5v-3l-5,5z" fill="#000"/></svg></div>
<div class="cb" style="left:502px;top:361px;background:#fff"><svg width="7" height="7" viewBox="0 0 7 7" style="position:absolute;left:1px;top:1px" shape-rendering="crispEdges"><path d="M0,2v3l2,2l5,-5v-3l-5,5z" fill="#000"/></svg></div>
<div class="cb" style="left:502px;top:376px;background:#d4d0c8"><svg width="7" height="7" viewBox="0 0 7 7" style="position:absolute;left:1px;top:1px" shape-rendering="crispEdges"><path d="M0,2v3l2,2l5,-5v-3l-5,5z" fill="#808080"/></svg></div>
<div class="btn" style="left:550px;top:393px;width:75px;height:23px"></div>
<div class="gb" style="left:14px;top:457px;width:146px;height:56px"><i></i></div>
<div class="gb" style="left:172px;top:457px;width:146px;height:56px"><i></i></div>
<div class="gb" style="left:331px;top:457px;width:147px;height:43px"><i></i></div>
<span class="t m" id="t0" style="top:6px;left:23.40px;color:#fff;font-weight:bold;letter-spacing:0.256px;">Nero CD-DVD Speed 4.7.5.0</span>
<span class="t m" id="t1" style="top:25px;left:8.90px;letter-spacing:-0.478px;">File</span>
<span class="t m" id="t2" style="top:25px;left:37.40px;letter-spacing:-0.060px;">Run Test</span>
<span class="t m" id="t3" style="top:25px;left:91.90px;letter-spacing:0.153px;">Extra</span>
<span class="t m" id="t4" style="top:25px;left:129.90px;letter-spacing:-0.442px;">Help</span>
<span class="t m" id="t5" style="top:57px;left:176.90px;letter-spacing:0.723px;">[0:0]</span>
<span class="t m" id="t6" style="top:57px;left:210.40px;letter-spacing:-0.711px;">BENQ DVD DD DW1640 BSLB</span>
<span class="t m" id="t7" style="top:57px;left:499.40px;letter-spacing:0.391px;">Start</span>
<span class="t m" id="t8" style="top:57px;left:583.40px;letter-spacing:0.485px;">Exit</span>
<span class="t" id="t9" style="top:96px;left:17.90px;letter-spacing:-0.293px;">Benchmark</span>
<span class="t" id="t10" style="top:96px;left:83.40px;letter-spacing:-0.217px;">Create Disc</span>
<span class="t" id="t11" style="top:96px;left:150.40px;">Disc Info</span>
<span class="t" id="t12" style="top:94px;left:204.90px;letter-spacing:-0.217px;">Disc Quality</span>
<span class="t" id="t13" style="top:96px;left:272.40px;letter-spacing:-0.094px;">Advanced Disc Quality</span>
<span class="t" id="t14" style="top:96px;left:392.40px;letter-spacing:0.119px;">ScanDisc</span>
<span class="t" id="t15" style="top:123px;right:603.40px;">1000</span>
<span class="t" id="t16" style="top:150px;right:603.40px;">800</span>
<span class="t" id="t17" style="top:176px;right:603.40px;">600</span>
<span class="t" id="t18" style="top:203px;right:603.40px;">400</span>
<span class="t" id="t19" style="top:229px;right:603.40px;">200</span>
<span class="t" id="t20" style="top:136px;left:471.00px;">20</span>
<span class="t" id="t21" style="top:160px;left:471.00px;">16</span>
<span class="t" id="t22" style="top:184px;left:471.00px;">12</span>
<span class="t" id="t23" style="top:208px;left:471.00px;">8</span>
<span class="t" id="t24" style="top:232px;left:471.00px;">4</span>
<span class="t" id="t25" style="top:267px;left:42.40px;letter-spacing:-0.048px;">0.0</span>
<span class="t" id="t26" style="top:267px;left:94.65px;letter-spacing:-0.048px;">1.0</span>
<span class="t" id="t27" style="top:267px;left:146.90px;letter-spacing:-0.048px;">2.0</span>
<span class="t" id="t28" style="top:267px;left:199.15px;letter-spacing:-0.048px;">3.0</span>
<span class="t" id="t29" style="top:267px;left:251.40px;letter-spacing:-0.048px;">4.0</span>
<span class="t" id="t30" style="top:267px;left:303.65px;letter-spacing:-0.048px;">5.0</span>
<span class="t" id="t31" style="top:267px;left:355.90px;letter-spacing:-0.048px;">6.0</span>
<span class="t" id="t32" style="top:267px;left:408.15px;letter-spacing:-0.048px;">7.0</span>
<span class="t" id="t33" style="top:267px;left:460.40px;letter-spacing:-0.048px;">8.0</span>
<span class="t" id="t34" style="top:285px;right:603.40px;">500</span>
<span class="t" id="t35" style="top:312px;right:603.40px;">400</span>
<span class="t" id="t36" style="top:339px;right:603.40px;">300</span>
<span class="t" id="t37" style="top:365px;right:603.40px;">200</span>
<span class="t" id="t38" style="top:392px;right:603.40px;">100</span>
<span class="t" id="t39" style="top:285px;left:471.00px;">40</span>
<span class="t" id="t40" style="top:312px;left:471.00px;">32</span>
<span class="t" id="t41" style="top:339px;left:471.00px;">24</span>
<span class="t" id="t42" style="top:365px;left:471.00px;">16</span>
<span class="t" id="t43" style="top:392px;left:471.00px;">8</span>
<span class="t" id="t44" style="top:429px;left:42.40px;letter-spacing:-0.048px;">0.0</span>
<span class="t" id="t45" style="top:429px;left:94.65px;letter-spacing:-0.048px;">1.0</span>
<span class="t" id="t46" style="top:429px;left:146.90px;letter-spacing:-0.048px;">2.0</span>
<span class="t" id="t47" style="top:429px;left:199.15px;letter-spacing:-0.048px;">3.0</span>
<span class="t" id="t48" style="top:429px;left:251.40px;letter-spacing:-0.048px;">4.0</span>
<span class="t" id="t49" style="top:429px;left:303.65px;letter-spacing:-0.048px;">5.0</span>
<span class="t" id="t50" style="top:429px;left:355.90px;letter-spacing:-0.048px;">6.0</span>
<span class="t" id="t51" style="top:429px;left:408.15px;letter-spacing:-0.048px;">7.0</span>
<span class="t" id="t52" style="top:429px;left:460.40px;letter-spacing:-0.048px;">8.0</span>
<span class="t" id="t53" style="top:119px;left:499.90px;letter-spacing:-0.048px;background:#d4d0c8;padding:0 2px;margin-left:-2px;">Disc info</span>
<span class="t" id="t54" style="top:133px;left:499.90px;letter-spacing:-0.402px;">Type:</span>
<span class="t" id="t55" style="top:133px;left:544.90px;color:#00007b;letter-spacing:-0.093px;">DVD-R DL</span>
<span class="t" id="t56" style="top:150px;left:499.90px;letter-spacing:-0.800px;">ID:</span>
<span class="t" id="t57" style="top:150px;left:544.90px;color:#00007b;letter-spacing:-0.238px;">RITEKP01</span>
<span class="t" id="t58" style="top:168px;left:499.90px;letter-spacing:-0.374px;">Date:</span>
<span class="t" id="t59" style="top:168px;left:544.90px;color:#00007b;letter-spacing:-0.147px;">26 Mar 2007</span>
<span class="t" id="t60" style="top:186px;left:499.90px;letter-spacing:-0.337px;">Label:</span>
<span class="t" id="t61" style="top:186px;left:544.90px;color:#00007b;letter-spacing:0.142px;">New</span>
<span class="t" id="t62" style="top:210px;left:499.90px;letter-spacing:-0.207px;background:#d4d0c8;padding:0 2px;margin-left:-2px;">Settings</span>
<span class="t" id="t63" style="top:229px;left:504.40px;letter-spacing:0.142px;">8 X</span>
<span class="t" id="t64" style="top:256px;left:501.90px;letter-spacing:-0.199px;">Start:</span>
<span class="t" id="t65" style="top:254px;left:556.90px;letter-spacing:-0.205px;">0000 MB</span>
<span class="t" id="t66" style="top:278px;left:501.90px;letter-spacing:-0.447px;">End:</span>
<span class="t" id="t67" style="top:277px;left:556.90px;letter-spacing:-0.205px;">8147 MB</span>
<span class="t" id="t68" style="top:296px;left:519.90px;letter-spacing:-0.014px;">Quick scan</span>
<span class="t" id="t69" style="top:314px;left:519.90px;letter-spacing:-0.112px;">Show C1/PIE</span>
<span class="t" id="t70" style="top:329px;left:519.90px;letter-spacing:-0.051px;">Show C2/PIF</span>
<span class="t" id="t71" style="top:345px;left:519.90px;letter-spacing:-0.206px;">Show jitter</span>
<span class="t" id="t72" style="top:361px;left:519.90px;letter-spacing:-0.166px;">Show read speed</span>
<span class="t" id="t73" style="top:376px;left:519.90px;color:#808080;letter-spacing:-0.169px;text-shadow:1px 1px 0 #fff;">Show write speed</span>
<span class="t" id="t74" style="top:397px;left:562.40px;letter-spacing:0.123px;">Advanced</span>
<span class="t" id="t75" style="top:432px;left:501.90px;letter-spacing:-0.265px;">Quality score:</span>
<span class="t" id="t76" style="top:432px;right:23.90px;color:#00007b;">0</span>
<span class="t" id="t77" style="top:466px;left:501.90px;letter-spacing:-0.472px;">Progress:</span>
<span class="t" id="t78" style="top:466px;right:23.40px;color:#00007b;">100 %</span>
<span class="t" id="t79" style="top:482px;left:501.90px;letter-spacing:-0.300px;">Position:</span>
<span class="t" id="t80" style="top:482px;right:23.40px;color:#00007b;">8146 MB</span>
<span class="t" id="t81" style="top:497px;left:501.90px;letter-spacing:-0.315px;">Speed:</span>
<span class="t" id="t82" style="top:497px;right:23.40px;color:#00007b;">3.39 X</span>
<span class="t" id="t83" style="top:452px;left:35.40px;letter-spacing:-0.451px;background:#d4d0c8;padding:0 2px 0 13px;margin-left:-13px;">PI Errors</span>
<span class="t" id="t84" style="top:467px;left:21.90px;letter-spacing:-0.218px;">Average:</span>
<span class="t" id="t85" style="top:467px;right:493.90px;color:#00007b;">139.72</span>
<span class="t" id="t86" style="top:482px;left:21.90px;letter-spacing:-0.562px;">Maximum:</span>
<span class="t" id="t87" style="top:482px;right:493.90px;color:#00007b;">846</span>
<span class="t" id="t88" style="top:497px;left:21.90px;">Total:</span>
<span class="t" id="t89" style="top:497px;right:493.90px;color:#00007b;">4552623</span>
<span class="t" id="t90" style="top:452px;left:193.40px;letter-spacing:-0.328px;background:#d4d0c8;padding:0 2px 0 13px;margin-left:-13px;">PI Failures</span>
<span class="t" id="t91" style="top:467px;left:180.40px;letter-spacing:-0.218px;">Average:</span>
<span class="t" id="t92" style="top:467px;right:335.40px;color:#00007b;">2.27</span>
<span class="t" id="t93" style="top:482px;left:180.40px;letter-spacing:-0.562px;">Maximum:</span>
<span class="t" id="t94" style="top:482px;right:335.40px;color:#00007b;">431</span>
<span class="t" id="t95" style="top:497px;left:180.40px;">Total:</span>
<span class="t" id="t96" style="top:497px;right:335.40px;color:#00007b;">590794</span>
<span class="t" id="t97" style="top:452px;left:351.40px;letter-spacing:-0.209px;background:#d4d0c8;padding:0 2px 0 13px;margin-left:-13px;">Jitter</span>
<span class="t" id="t98" style="top:467px;left:339.90px;letter-spacing:-0.218px;">Average:</span>
<span class="t" id="t99" style="top:467px;right:175.90px;color:#00007b;">9.39 %</span>
<span class="t" id="t100" style="top:482px;left:339.90px;letter-spacing:-0.562px;">Maximum:</span>
<span class="t" id="t101" style="top:482px;right:175.90px;color:#00007b;">32.9 %</span>
<span class="t" id="t102" style="top:501px;left:339.90px;letter-spacing:-0.334px;">PO failures:</span>
<span class="t" id="t103" style="top:501px;right:175.90px;color:#00007b;">1688939</span>
<div class="sq" style="left:24px;top:454px;background:#0ff"></div>
<div class="sq" style="left:182px;top:454px;background:#ff0"></div>
<div class="sq" style="left:341px;top:454px;background:#f0f"></div>
<svg class="abs" style="left:575px;top:456px" width="70" height="67" viewBox="0 0 70 67"><circle cx="24" cy="24.6" r="18.3" fill="rgba(255,255,255,0.30)" stroke="rgba(170,168,160,0.35)" stroke-width="1"/><circle cx="24" cy="24.6" r="5.2" fill="none" stroke="rgba(255,255,255,0.5)" stroke-width="2.2"/><circle cx="24" cy="24.6" r="2.2" fill="rgba(212,208,200,0.8)"/></svg>
<div class="abs" id="wm" style="will-change:transform;left:560px;top:505px;font-weight:bold;font-size:18.5px;line-height:20px;color:rgba(255,255,255,0.36);white-space:pre;transform-origin:0 0;transform:scaleX(0.625)">CDRLABS.COM</div>
</body></html>
